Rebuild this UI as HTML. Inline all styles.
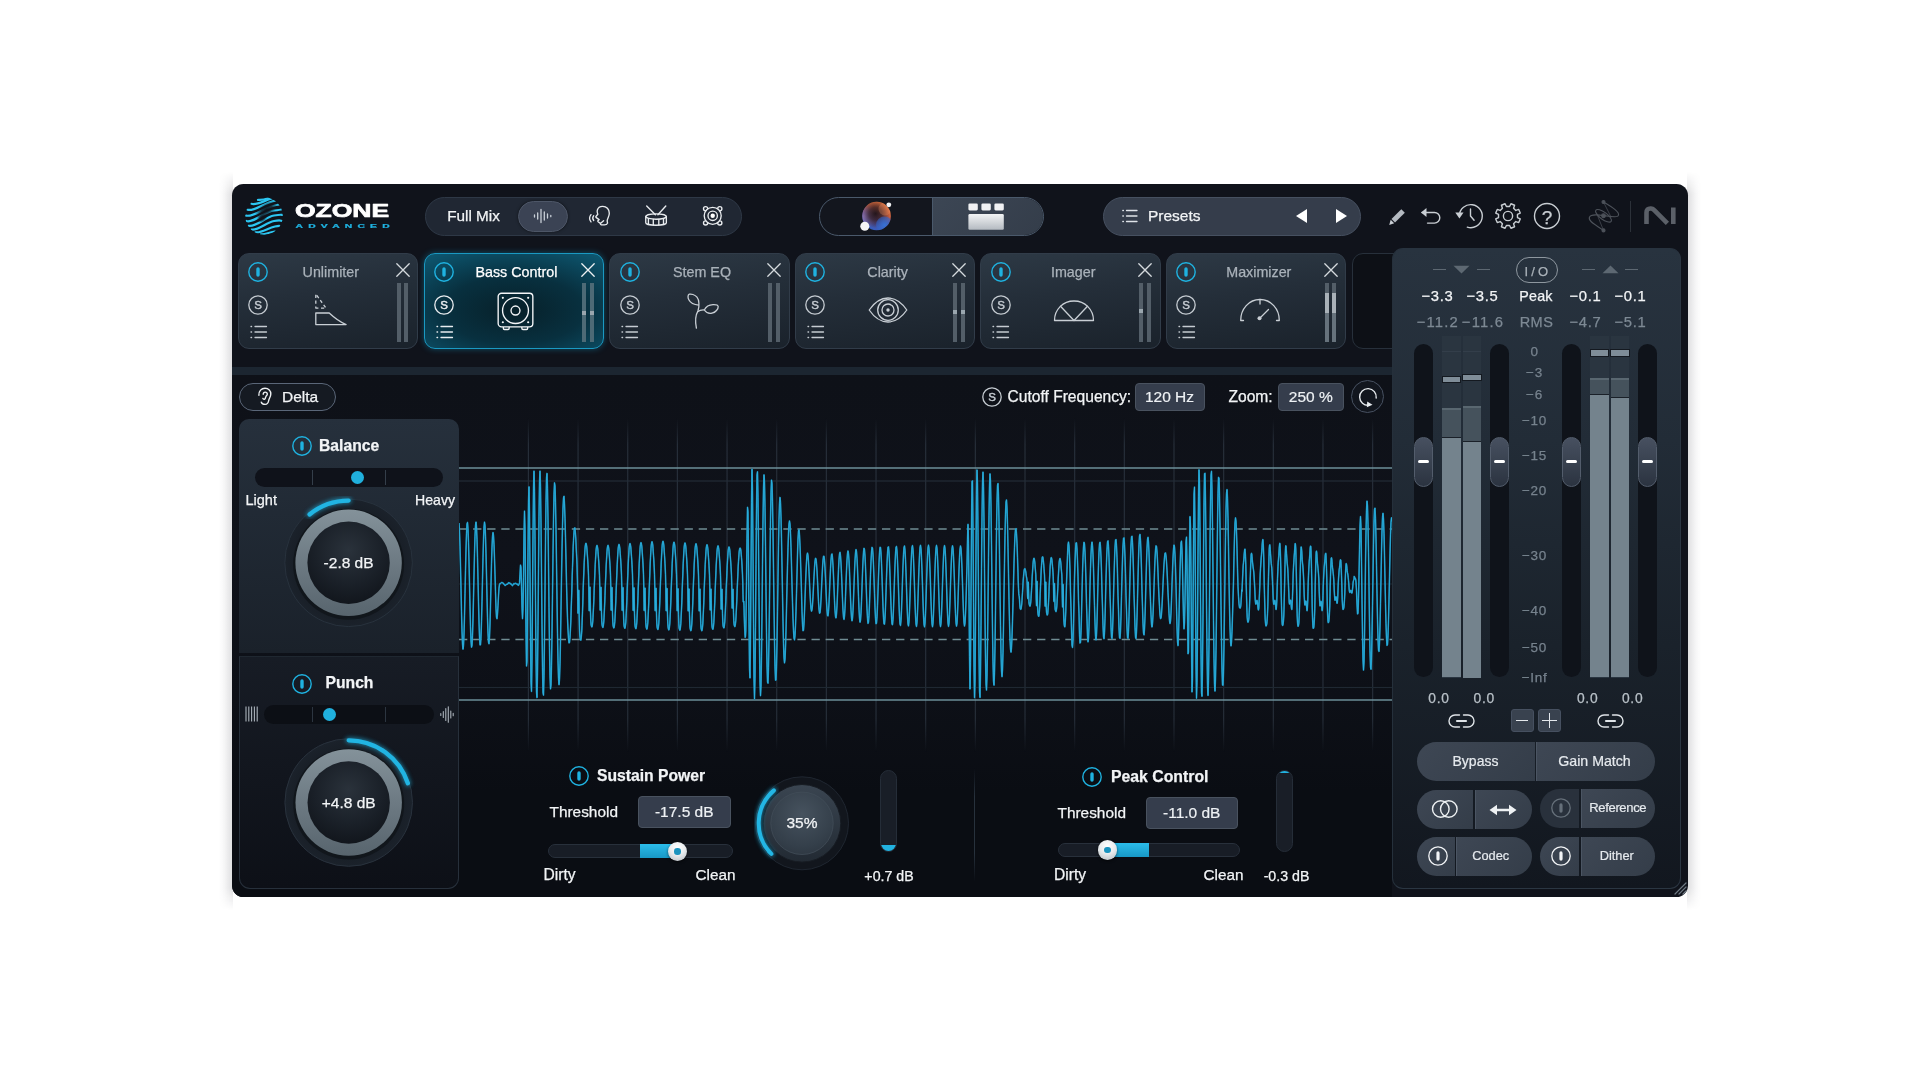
<!DOCTYPE html>
<html lang="en"><head><meta charset="utf-8"><title>Ozone Advanced - Bass Control</title>
<style>
*{box-sizing:border-box;margin:0;padding:0}
html,body{width:1920px;height:1080px;overflow:hidden;background:#fff}
body{position:relative;font-family:"Liberation Sans",Arial,sans-serif;color:#fff;-webkit-font-smoothing:antialiased}
.a{position:absolute}
.t{position:absolute;white-space:nowrap;line-height:1;transform:translate(-50%,-50%);color:#f2f4f6;-webkit-text-stroke:.25px}
.tl{position:absolute;white-space:nowrap;line-height:1;transform:translate(0,-50%);color:#f2f4f6;-webkit-text-stroke:.25px}
.tr{position:absolute;white-space:nowrap;line-height:1;transform:translate(-100%,-50%);color:#f2f4f6;-webkit-text-stroke:.25px}
svg{position:absolute;overflow:visible}
#win{left:232px;top:184px;width:1456px;height:712.700px;border-radius:11.500px;background:#10131b;overflow:hidden}
.pill{position:absolute;border-radius:20px}
.card{position:absolute;top:252.500px;width:180px;height:96.500px;border-radius:11px;border:1px solid #313c49;background:linear-gradient(172deg,#2d3945 0%,#242e39 42%,#1a222b 100%)}
.card.sel{border:1.500px solid #1a99c2;background:radial-gradient(ellipse 78% 72% at 50% 60%,#072029 0%,#08303f 50%,#0d566f 100%);box-shadow:0 0 6px rgba(20,150,195,.45)}
.ctitle{font-size:14.3px;color:#aab2ba}
.sel .ctitle{color:#fff}
.vbox{position:absolute;border-radius:4px;background:#353d4c;border:1px solid #49525f;font-size:15.5px;color:#eef1f4;text-align:center;-webkit-text-stroke:.2px}
.btn{position:absolute;background:#39424f;color:#e6eaee;font-size:14.5px;text-align:center;-webkit-text-stroke:.2px}
</style></head><body><div id="root" style="position:absolute;left:0;top:0;width:1920px;height:1080px;will-change:transform;transform:translateZ(0)">
<div class="a" style="left:219px;top:172px;width:14px;height:738px;background:linear-gradient(to left,rgba(10,10,25,.14),rgba(10,10,25,.04) 60%,rgba(10,10,25,0));-webkit-mask-image:linear-gradient(to bottom,transparent,#000 3%,#000 97%,transparent);mask-image:linear-gradient(to bottom,transparent,#000 3%,#000 97%,transparent)"></div>
<div class="a" style="left:1687px;top:172px;width:14px;height:738px;background:linear-gradient(to right,rgba(10,10,25,.14),rgba(10,10,25,.04) 60%,rgba(10,10,25,0));-webkit-mask-image:linear-gradient(to bottom,transparent,#000 3%,#000 97%,transparent);mask-image:linear-gradient(to bottom,transparent,#000 3%,#000 97%,transparent)"></div>
<div id="win" class="a"></div>
<!-- ===== HEADER ===== -->
<svg class="a" id="logo" style="left:245.4px;top:197.4px" width="38" height="38" viewBox="0 0 38 38">
<defs><clipPath id="lc"><circle cx="19" cy="19" r="18.8"/></clipPath>
<radialGradient id="lfade" cx="50%" cy="50%" r="50%"><stop offset="0" stop-color="#10131b" stop-opacity=".97"/><stop offset=".45" stop-color="#10131b" stop-opacity=".8"/><stop offset="1" stop-color="#10131b" stop-opacity="0"/></radialGradient></defs>
<g clip-path="url(#lc)" fill="none" stroke="#2cc6f1" stroke-width="2.2" stroke-linecap="round">
<path d="M13 2.8C17 3.5,21 2,24 1"/>
<path d="M6.5 6.8C12 8.5,19 3.5,27 1.5"/>
<path d="M2.5 12.8C10 14.5,18 6,31 3.5"/>
<path d="M1 18.6C10 20.5,18 10,34 7.5"/>
<path d="M1.3 24C9 26.5,19 14.5,29 13.5S35 12.5,38 12"/>
<path d="M3.5 28.8C11 30.5,20 20,29 18.5S36 18,38.5 18"/>
<path d="M6.5 32.5C13 34,21 25.5,29 24S35 24,38 24"/>
<path d="M10.5 35.3C16 36.5,23 31,30 29.5S34 29.5,37 29.5"/>
<path d="M16 37.3C20 37.8,25 35,30 34.5"/>
</g>
<ellipse cx="21.5" cy="12.5" rx="13" ry="6.5" fill="url(#lfade)" transform="rotate(-32 21.5 12.5)"/>
<ellipse cx="17" cy="21" rx="6" ry="4" fill="url(#lfade)" transform="rotate(-35 17 21)"/>
</svg>
<svg class="a" style="left:292px;top:200px" width="102" height="32" viewBox="0 0 102 32">
<text x="2.9" y="17.3" font-family="Liberation Sans,Arial,sans-serif" font-weight="700" font-size="18.6" fill="#fff" stroke="#fff" stroke-width=".7" stroke-linejoin="round" textLength="94.3" lengthAdjust="spacingAndGlyphs">OZONE</text>
<g transform="translate(3.5 27.8) scale(1.75 1)"><text x="0" y="0" font-family="Liberation Sans,Arial,sans-serif" font-weight="700" font-size="5.9" fill="#1fb2e0" stroke="#1fb2e0" stroke-width=".25" textLength="53.8" lengthAdjust="spacing">ADVANCED</text></g>
</svg>
<!-- Full Mix pill -->
<div class="pill" style="left:425px;top:197px;width:317px;height:39px;background:#202733;border:1px solid #2e3846"></div>
<div class="t" style="left:473.5px;top:216px;font-size:15.3px">Full Mix</div>
<div class="pill" style="left:518px;top:201px;width:50px;height:30.5px;background:#3b4354;border:1px solid #4d5667;box-shadow:0 0 3px rgba(0,0,0,.5)"></div>
<svg style="left:533px;top:208px" width="20" height="16" viewBox="0 0 20 16" fill="none" stroke="#c9d0d8" stroke-width="1.3" stroke-linecap="round">
<path d="M1.5 7v2M4.7 5v6M8 1.5v13M11.3 4v8M14.5 6v4M17.8 7.3v1.4"/></svg>
<!-- vocal icon -->
<svg style="left:588px;top:205px" width="24" height="22" viewBox="0 0 24 22" fill="none" stroke="#e9ecef" stroke-width="1.35" stroke-linecap="round" stroke-linejoin="round">
<path d="M15.6 15.7L12.4 18.4L10.1 16.7C9.6 16.3,9.8 15.7,10.3 15.4L11.1 14.6L8.3 12.6C7.7 12.2,7.7 11.6,8.1 11.2L9.8 9.2C9.2 8,9 6.5,9.3 5.2C10 2.8,12 1.4,14.7 1.4C18.5 1.4,21.3 4.2,21.3 8.2C21.3 11.6,19.4 13.2,19.2 15.6C19.1 16.6,19.6 17.4,19.5 18.2C19 19.3,17.8 19.8,16.4 19.8L14 19.8C13 19.8,12.2 19.3,12.4 18.4"/>
<path d="M5.7 10.7C4.5 12.2,4.5 14,5.7 15.5M3 9.6C1.1 12,1.1 14.5,3 16.9"/></svg>
<!-- drum icon -->
<svg style="left:644px;top:204px" width="24" height="23" viewBox="0 0 24 23" fill="none" stroke="#e9ecef" stroke-width="1.35" stroke-linecap="round" stroke-linejoin="round">
<path d="M2.7 2L11.4 10.7M21.8 2L13.9 10.7"/>
<ellipse cx="12.05" cy="12.5" rx="10.3" ry="2.7"/>
<path d="M1.75 12.5V18.7C1.75 20.1,6.3 21.2,12.05 21.2S22.35 20.1,22.35 18.7V12.5"/>
<path d="M4.4 14.7V20M9.3 15.3V20.9M14.8 15.3V20.9M19.5 14.7V20"/></svg>
<!-- bass/speaker icon -->
<svg style="left:702px;top:205px" width="22" height="22" viewBox="0 0 22 22" fill="none" stroke="#e9ecef" stroke-width="1.35">
<circle cx="3.6" cy="3.7" r="2.1"/><circle cx="17.8" cy="3.7" r="2.1"/><circle cx="3.6" cy="17.9" r="2.1"/><circle cx="17.8" cy="17.9" r="2.1"/>
<circle cx="10.7" cy="10.8" r="8.5" fill="#202733"/>
<circle cx="10.7" cy="10.8" r="4.7"/><circle cx="10.7" cy="10.8" r="2.2" fill="#fff" stroke="none"/></svg>

<!-- center toggle -->
<div class="pill" style="left:819px;top:197px;width:224.5px;height:39px;background:#13161e;border:1.3px solid #4a596b;overflow:hidden">
 <div class="a" style="left:111.5px;top:-1.3px;width:112px;height:39px;background:linear-gradient(135deg,#3c4654,#343d4a);border-left:1.3px solid #4a596b"></div>
</div>
<svg style="left:857px;top:198px" width="40" height="36" viewBox="0 0 40 36">
<defs><linearGradient id="orb" x1=".75" y1="0" x2=".3" y2="1"><stop offset="0" stop-color="#f07a3e"/><stop offset=".35" stop-color="#c9603f"/><stop offset=".6" stop-color="#6d4d8c"/><stop offset="1" stop-color="#2c5fc6"/></linearGradient>
<radialGradient id="orbd" cx="46%" cy="42%" r="50%"><stop offset="0" stop-color="#1d1218" stop-opacity=".95"/><stop offset=".45" stop-color="#2a1a20" stop-opacity=".75"/><stop offset="1" stop-color="#2a1a20" stop-opacity="0"/></radialGradient>
<radialGradient id="orbl" cx="8%" cy="50%" r="45%"><stop offset="0" stop-color="#a58ad0" stop-opacity=".85"/><stop offset="1" stop-color="#a58ad0" stop-opacity="0"/></radialGradient>
<radialGradient id="orb2" cx="50%" cy="50%" r="50%"><stop offset="0" stop-color="#3473d6" stop-opacity=".95"/><stop offset="1" stop-color="#2f62c8" stop-opacity=".55"/></radialGradient>
<clipPath id="orbc"><circle cx="19.6" cy="18" r="14.3"/></clipPath></defs>
<circle cx="19.6" cy="18" r="14.3" fill="url(#orb)"/>
<circle cx="19.6" cy="18" r="14.3" fill="url(#orbl)"/>
<circle cx="19.6" cy="18" r="14.3" fill="url(#orbd)"/>
<g clip-path="url(#orbc)"><circle cx="27.5" cy="27" r="8.5" fill="url(#orb2)"/><circle cx="28" cy="11" r="6.5" fill="#f59a6a" opacity=".28"/></g>
<circle cx="7.8" cy="28.3" r="4.5" fill="#f4f5f6"/>
<circle cx="31.8" cy="6.8" r="2.4" fill="#f4f5f6"/></svg>
<svg style="left:968.3px;top:202.9px" width="37" height="28" viewBox="0 0 37 28">
<defs><linearGradient id="gb" x1="0" y1="0" x2="0" y2="1"><stop offset="0" stop-color="#f2f3f4"/><stop offset="1" stop-color="#b4bac1"/></linearGradient></defs>
<rect x="0.4" y="0.5" width="9.4" height="6.9" rx="1.3" fill="#f1f2f4"/><rect x="13.4" y="0.5" width="9.4" height="6.9" rx="1.3" fill="#f1f2f4"/><rect x="26.4" y="0.5" width="9.4" height="6.9" rx="1.3" fill="#f1f2f4"/>
<rect x="0.4" y="11.1" width="35.4" height="15.6" rx="1.3" fill="url(#gb)"/></svg>

<!-- presets -->
<div class="pill" style="left:1103px;top:197px;width:258px;height:39px;background:#353d4b;border:1px solid #465060"></div>
<svg style="left:1122px;top:209px" width="16" height="14" viewBox="0 0 16 14" fill="none" stroke="#dfe3e8" stroke-width="1.3" stroke-linecap="round">
<path d="M4.5 1.5h10.5M4.5 7h10.5M4.5 12.5h10.5M0.8 1.5h.6M0.8 7h.6M0.8 12.5h.6"/></svg>
<div class="tl" style="left:1148px;top:216px;font-size:15.5px">Presets</div>
<svg style="left:1295px;top:208px" width="13" height="16" viewBox="0 0 13 16"><path d="M12 1v14L1 8z" fill="#fff"/></svg>
<svg style="left:1335px;top:208px" width="13" height="16" viewBox="0 0 13 16"><path d="M1 1v14l11-7z" fill="#fff"/></svg>

<!-- right icons -->
<svg style="left:1388px;top:208px" width="18" height="18" viewBox="0 0 18 18"><path d="M13.3 1.2l3.5 3.5-9.8 9.8-3.5-3.5z" fill="#b4bac1"/><path d="M2.7 11.8l3.5 3.5-5 1.6z" fill="#c9ced3"/></svg>
<svg style="left:1419px;top:206px" width="23" height="20" viewBox="0 0 23 20" fill="none" stroke="#c9ced3" stroke-width="1.4" stroke-linecap="round" stroke-linejoin="round">
<path d="M3 6.5h12.5a5.3 5.3 0 0 1 0 10.6h-7"/><path d="M7.5 2L2 6.5 7.5 11z" fill="#c9ced3" stroke="none"/></svg>
<svg style="left:1454px;top:202px" width="30" height="28" viewBox="0 0 30 28" fill="none" stroke="#c9ced3" stroke-width="1.4" stroke-linecap="round" stroke-linejoin="round">
<path d="M5.3 13.5a11.5 11.5 0 1 1 8 11.6"/><path d="M16.5 7v7l3.6 4.3"/><path d="M1.3 10.5h8.2l-4.1 6z" fill="#c9ced3" stroke="none"/></svg>
<svg style="left:1494px;top:202px" width="28" height="28" viewBox="-14 -14 28 28" fill="none" stroke="#c9ced3" stroke-width="1.4" stroke-linejoin="round">
<path d="M2.94 -12.25L6.58 -10.74L5.58 -7.81L7.81 -5.58L10.74 -6.58L12.25 -2.94L9.47 -1.58L9.47 1.58L12.25 2.94L10.74 6.58L7.81 5.58L5.58 7.81L6.58 10.74L2.94 12.25L1.58 9.47L-1.58 9.47L-2.94 12.25L-6.58 10.74L-5.58 7.81L-7.81 5.58L-10.74 6.58L-12.25 2.94L-9.47 1.58L-9.47 -1.58L-12.25 -2.94L-10.74 -6.58L-7.81 -5.58L-5.58 -7.81L-6.58 -10.74L-2.94 -12.25L-1.58 -9.47L1.58 -9.47Z"/><circle r="4.6"/></svg>
<svg style="left:1533px;top:202px" width="28" height="28" viewBox="0 0 28 28" fill="none" stroke="#c9ced3" stroke-width="1.4"><circle cx="14" cy="14" r="12.5"/></svg>
<div class="t" style="left:1547px;top:216.5px;font-size:19px;color:#c9ced3">?</div>
<!-- scribble logo -->
<svg style="left:0;top:0" width="1920" height="1080" viewBox="0 0 1920 1080" fill="none" stroke="#4d525a" stroke-width="1.1" stroke-linecap="round">
<path d="M1603.5 202C1612 207,1621 212.5,1618 216C1615 219.5,1592 211,1589.5 217C1587.5 221.5,1597 225.5,1603.5 230.4"/>
<ellipse cx="1603.5" cy="215.8" rx="9.5" ry="3.6" transform="rotate(36 1603.5 215.8)"/>
<path d="M1603.5 202L1611 217M1603.5 230.4L1596.5 213" stroke-width=".7"/>
<circle cx="1603.5" cy="202" r="1.5" fill="#4d525a"/><circle cx="1603.5" cy="230.4" r="1.5" fill="#4d525a"/><circle cx="1603.5" cy="215.8" r="1.9" fill="#4d525a"/></svg>
<div class="a" style="left:1629.5px;top:201px;width:1.3px;height:30.5px;background:#2c3139"></div>
<svg style="left:0;top:0" width="1920" height="1080" viewBox="0 0 1920 1080" fill="none" stroke="#5b6068" stroke-width="4.6">
<path d="M1646.5 224.1V212.8Q1646.5 208.3 1650.8 208.5Q1652.6 208.6 1654.2 210.2L1667.4 223.3M1673.3 207.5V224.1"/></svg>

<!-- ===== MODULE CARDS ===== -->
<div class="card" style="left:237.9px;width:180.6px"></div>
<svg style="left:247.3px;top:261.2px" width="22" height="22" viewBox="0 0 22 22"><circle cx="11" cy="11" r="9.2" fill="none" stroke="#1fb2e0" stroke-width="1.4"/><rect x="9.3" y="6.3" width="3.4" height="9.4" rx="1.7" fill="#1fb2e0"/></svg>
<svg style="left:247.3px;top:294px" width="22" height="22" viewBox="0 0 22 22"><circle cx="11" cy="11" r="9.2" fill="none" stroke="#c5cbd1" stroke-width="1.3"/><text x="11" y="15" text-anchor="middle" font-family="Liberation Sans,Arial,sans-serif" font-size="11.5" font-weight="400" stroke="#c5cbd1" stroke-width=".45" fill="#c5cbd1">S</text></svg>
<svg style="left:250px;top:324.5px" width="18" height="14" viewBox="0 0 18 14" fill="none" stroke="#c5cbd1" stroke-width="1.3" stroke-linecap="round"><path d="M5 1.5h11.5M5 7h11.5M5 12.5h11.5M1 1.5h.6M1 7h.6M1 12.5h.6"/></svg>
<div class="t ctitle" style="left:330.8px;top:272px;">Unlimiter</div>
<svg style="left:395.5px;top:263px" width="14" height="14" viewBox="0 0 14 14" fill="none" stroke="#d5dade" stroke-width="1.3" stroke-linecap="round"><path d="M.8.8l12.4 12.4M13.2.8L.8 13.2"/></svg>
<div class="a" style="left:396.5px;top:283px;width:4px;height:59px;background:#535e68"></div>
<div class="a" style="left:404.4px;top:283px;width:4px;height:59px;background:#535e68"></div>
<svg style="left:311.5px;top:292px" width="36" height="36" viewBox="0 0 36 36" fill="none" stroke="#c9cfd5" stroke-width="1.3" stroke-linejoin="round">
<path d="M3.8 21h13.4C22 25.5,27 29.5,34.1 32.6H3.8z"/><path d="M3.8 16.1V2l10.2 14.1z" stroke-dasharray="3.2 2.6" stroke-dashoffset="1.5"/></svg>
<div class="card sel" style="left:423.5px;width:180.6px"></div>
<svg style="left:432.9px;top:261.2px" width="22" height="22" viewBox="0 0 22 22"><circle cx="11" cy="11" r="9.2" fill="none" stroke="#1fb2e0" stroke-width="1.4"/><rect x="9.3" y="6.3" width="3.4" height="9.4" rx="1.7" fill="#1fb2e0"/></svg>
<svg style="left:432.9px;top:294px" width="22" height="22" viewBox="0 0 22 22"><circle cx="11" cy="11" r="9.2" fill="none" stroke="#e8ecef" stroke-width="1.3"/><text x="11" y="15" text-anchor="middle" font-family="Liberation Sans,Arial,sans-serif" font-size="11.5" font-weight="400" stroke="#e8ecef" stroke-width=".45" fill="#e8ecef">S</text></svg>
<svg style="left:435.6px;top:324.5px" width="18" height="14" viewBox="0 0 18 14" fill="none" stroke="#e8ecef" stroke-width="1.3" stroke-linecap="round"><path d="M5 1.5h11.5M5 7h11.5M5 12.5h11.5M1 1.5h.6M1 7h.6M1 12.5h.6"/></svg>
<div class="t ctitle" style="left:516.4px;top:272px;color:#fff;">Bass Control</div>
<svg style="left:581.1px;top:263px" width="14" height="14" viewBox="0 0 14 14" fill="none" stroke="#eef1f3" stroke-width="1.3" stroke-linecap="round"><path d="M.8.8l12.4 12.4M13.2.8L.8 13.2"/></svg>
<div class="a" style="left:582.1px;top:283px;width:4px;height:59px;background:#4d6a76"></div>
<div class="a" style="left:582.1px;top:311px;width:4px;height:4px;background:#9aa6ae"></div>
<div class="a" style="left:590px;top:283px;width:4px;height:59px;background:#4d6a76"></div>
<div class="a" style="left:590px;top:311px;width:4px;height:4px;background:#9aa6ae"></div>
<svg style="left:497.1px;top:291.8px" width="37" height="39" viewBox="0 0 38 40" fill="none" stroke="#f4f6f8" stroke-width="1.4">
<rect x="1.2" y="1.2" width="35.6" height="34.6" rx="3.5"/><circle cx="19" cy="19" r="13.3"/><circle cx="19" cy="19" r="4.6"/>
<circle cx="6" cy="6" r="1.1" fill="#f4f6f8" stroke="none"/><circle cx="32" cy="6" r="1.1" fill="#f4f6f8" stroke="none"/><circle cx="6" cy="31" r="1.1" fill="#f4f6f8" stroke="none"/><circle cx="32" cy="31" r="1.1" fill="#f4f6f8" stroke="none"/>
<path d="M6.5 36v1.3c0 .7.5 1.2 1.2 1.2h3.6c.7 0 1.2-.5 1.2-1.2V36M25.5 36v1.3c0 .7.5 1.2 1.2 1.2h3.6c.7 0 1.2-.5 1.2-1.2V36"/></svg>
<div class="card" style="left:609.1px;width:180.6px"></div>
<svg style="left:618.5px;top:261.2px" width="22" height="22" viewBox="0 0 22 22"><circle cx="11" cy="11" r="9.2" fill="none" stroke="#1fb2e0" stroke-width="1.4"/><rect x="9.3" y="6.3" width="3.4" height="9.4" rx="1.7" fill="#1fb2e0"/></svg>
<svg style="left:618.5px;top:294px" width="22" height="22" viewBox="0 0 22 22"><circle cx="11" cy="11" r="9.2" fill="none" stroke="#c5cbd1" stroke-width="1.3"/><text x="11" y="15" text-anchor="middle" font-family="Liberation Sans,Arial,sans-serif" font-size="11.5" font-weight="400" stroke="#c5cbd1" stroke-width=".45" fill="#c5cbd1">S</text></svg>
<svg style="left:621.2px;top:324.5px" width="18" height="14" viewBox="0 0 18 14" fill="none" stroke="#c5cbd1" stroke-width="1.3" stroke-linecap="round"><path d="M5 1.5h11.5M5 7h11.5M5 12.5h11.5M1 1.5h.6M1 7h.6M1 12.5h.6"/></svg>
<div class="t ctitle" style="left:702px;top:272px;">Stem EQ</div>
<svg style="left:766.7px;top:263px" width="14" height="14" viewBox="0 0 14 14" fill="none" stroke="#d5dade" stroke-width="1.3" stroke-linecap="round"><path d="M.8.8l12.4 12.4M13.2.8L.8 13.2"/></svg>
<div class="a" style="left:767.7px;top:283px;width:4px;height:59px;background:#535e68"></div>
<div class="a" style="left:775.6px;top:283px;width:4px;height:59px;background:#535e68"></div>
<svg style="left:685px;top:292px" width="36" height="38" viewBox="0 0 36 38" fill="none" stroke="#c9cfd5" stroke-width="1.3" stroke-linecap="round" stroke-linejoin="round">
<path d="M11.4 36.1C10 29,10.5 23,13 18.8C14.5 14.5,14.3 8,12 5.2C9.8 2.5,6 1.7,4.3 2.2C2.8 2.7,2.6 5.5,3.8 7.8C5.5 11,9.5 12.8,13.7 13.2"/>
<path d="M12.6 19.7C14.5 18.3,17 17.8,19.3 18C21 14.5,24.5 12.7,28 12.6C30.5 12.5,33 13.2,33.2 14.5C33.4 17,30.5 20.5,27 21.2C24 21.8,21 20.5,19.3 18"/></svg>
<div class="card" style="left:794.7px;width:180.6px"></div>
<svg style="left:804.1px;top:261.2px" width="22" height="22" viewBox="0 0 22 22"><circle cx="11" cy="11" r="9.2" fill="none" stroke="#1fb2e0" stroke-width="1.4"/><rect x="9.3" y="6.3" width="3.4" height="9.4" rx="1.7" fill="#1fb2e0"/></svg>
<svg style="left:804.1px;top:294px" width="22" height="22" viewBox="0 0 22 22"><circle cx="11" cy="11" r="9.2" fill="none" stroke="#c5cbd1" stroke-width="1.3"/><text x="11" y="15" text-anchor="middle" font-family="Liberation Sans,Arial,sans-serif" font-size="11.5" font-weight="400" stroke="#c5cbd1" stroke-width=".45" fill="#c5cbd1">S</text></svg>
<svg style="left:806.8px;top:324.5px" width="18" height="14" viewBox="0 0 18 14" fill="none" stroke="#c5cbd1" stroke-width="1.3" stroke-linecap="round"><path d="M5 1.5h11.5M5 7h11.5M5 12.5h11.5M1 1.5h.6M1 7h.6M1 12.5h.6"/></svg>
<div class="t ctitle" style="left:887.6px;top:272px;">Clarity</div>
<svg style="left:952.3px;top:263px" width="14" height="14" viewBox="0 0 14 14" fill="none" stroke="#d5dade" stroke-width="1.3" stroke-linecap="round"><path d="M.8.8l12.4 12.4M13.2.8L.8 13.2"/></svg>
<div class="a" style="left:953.3px;top:283px;width:4px;height:59px;background:#535e68"></div>
<div class="a" style="left:953.3px;top:309.5px;width:4px;height:4px;background:#9aa6ae"></div>
<div class="a" style="left:961.2px;top:283px;width:4px;height:59px;background:#535e68"></div>
<div class="a" style="left:961.2px;top:309.5px;width:4px;height:4px;background:#9aa6ae"></div>
<svg style="left:867.8px;top:296px" width="40" height="28" viewBox="0 0 40 28" fill="none" stroke="#c9cfd5" stroke-width="1.3" stroke-linejoin="round">
<path d="M1.2 14C7 5.5,13 2,20 2s13 3.5 18.8 12C33 22.5,27 26,20 26S7 22.5,1.2 14z"/><circle cx="20" cy="14" r="10.3"/><circle cx="20" cy="14" r="6"/><circle cx="20" cy="14" r="1.7" fill="#c9cfd5" stroke="none"/></svg>
<div class="card" style="left:980.3px;width:180.6px"></div>
<svg style="left:989.7px;top:261.2px" width="22" height="22" viewBox="0 0 22 22"><circle cx="11" cy="11" r="9.2" fill="none" stroke="#1fb2e0" stroke-width="1.4"/><rect x="9.3" y="6.3" width="3.4" height="9.4" rx="1.7" fill="#1fb2e0"/></svg>
<svg style="left:989.7px;top:294px" width="22" height="22" viewBox="0 0 22 22"><circle cx="11" cy="11" r="9.2" fill="none" stroke="#c5cbd1" stroke-width="1.3"/><text x="11" y="15" text-anchor="middle" font-family="Liberation Sans,Arial,sans-serif" font-size="11.5" font-weight="400" stroke="#c5cbd1" stroke-width=".45" fill="#c5cbd1">S</text></svg>
<svg style="left:992.4px;top:324.5px" width="18" height="14" viewBox="0 0 18 14" fill="none" stroke="#c5cbd1" stroke-width="1.3" stroke-linecap="round"><path d="M5 1.5h11.5M5 7h11.5M5 12.5h11.5M1 1.5h.6M1 7h.6M1 12.5h.6"/></svg>
<div class="t ctitle" style="left:1073.2px;top:272px;">Imager</div>
<svg style="left:1137.9px;top:263px" width="14" height="14" viewBox="0 0 14 14" fill="none" stroke="#d5dade" stroke-width="1.3" stroke-linecap="round"><path d="M.8.8l12.4 12.4M13.2.8L.8 13.2"/></svg>
<div class="a" style="left:1138.9px;top:283px;width:4px;height:59px;background:#535e68"></div>
<div class="a" style="left:1138.9px;top:308.5px;width:4px;height:4px;background:#9aa6ae"></div>
<div class="a" style="left:1146.8px;top:283px;width:4px;height:59px;background:#535e68"></div>
<svg style="left:1053.1px;top:299px" width="42" height="24" viewBox="0 0 42 24" fill="none" stroke="#c9cfd5" stroke-width="1.3" stroke-linejoin="round" stroke-linecap="round">
<path d="M1.5 21.5C1.5 10.5,10 2,21 2s19.5 8.5 19.5 19.5z"/><path d="M7.5 7.2L21 21.5 34.5 7.2"/></svg>
<div class="card" style="left:1165.9px;width:180.6px"></div>
<svg style="left:1175.3px;top:261.2px" width="22" height="22" viewBox="0 0 22 22"><circle cx="11" cy="11" r="9.2" fill="none" stroke="#1fb2e0" stroke-width="1.4"/><rect x="9.3" y="6.3" width="3.4" height="9.4" rx="1.7" fill="#1fb2e0"/></svg>
<svg style="left:1175.3px;top:294px" width="22" height="22" viewBox="0 0 22 22"><circle cx="11" cy="11" r="9.2" fill="none" stroke="#c5cbd1" stroke-width="1.3"/><text x="11" y="15" text-anchor="middle" font-family="Liberation Sans,Arial,sans-serif" font-size="11.5" font-weight="400" stroke="#c5cbd1" stroke-width=".45" fill="#c5cbd1">S</text></svg>
<svg style="left:1178px;top:324.5px" width="18" height="14" viewBox="0 0 18 14" fill="none" stroke="#c5cbd1" stroke-width="1.3" stroke-linecap="round"><path d="M5 1.5h11.5M5 7h11.5M5 12.5h11.5M1 1.5h.6M1 7h.6M1 12.5h.6"/></svg>
<div class="t ctitle" style="left:1258.8px;top:272px;">Maximizer</div>
<svg style="left:1323.5px;top:263px" width="14" height="14" viewBox="0 0 14 14" fill="none" stroke="#d5dade" stroke-width="1.3" stroke-linecap="round"><path d="M.8.8l12.4 12.4M13.2.8L.8 13.2"/></svg>
<div class="a" style="left:1324.5px;top:283px;width:4px;height:59px;background:#535e68"></div>
<div class="a" style="left:1324.5px;top:293px;width:4px;height:20px;background:#a9b1b8"></div>
<div class="a" style="left:1324.5px;top:313px;width:4px;height:29px;background:#66727c"></div>
<div class="a" style="left:1332.4px;top:283px;width:4px;height:59px;background:#535e68"></div>
<div class="a" style="left:1332.4px;top:293px;width:4px;height:20px;background:#a9b1b8"></div>
<div class="a" style="left:1332.4px;top:313px;width:4px;height:29px;background:#66727c"></div>
<svg style="left:1238.5px;top:297px" width="42" height="26" viewBox="0 0 42 26" fill="none" stroke="#c9cfd5" stroke-width="1.3" stroke-linecap="round" stroke-linejoin="round">
<path d="M4.5 23.5H1.7C1.7 12,10 2.5,21 2.5S40.3 12,40.3 23.5h-2.8"/><path d="M21 2.5v4.5M21 21l8.5-8.5"/><circle cx="20.5" cy="21.3" r="2" fill="#c9cfd5" stroke="none"/></svg>
<div class="a" style="left:1352px;top:253px;width:60px;height:96px;border-radius:11px;border:1px solid #27303b;background:#0d1016"></div>

<!-- ===== MAIN VIEW ===== -->
<div class="a" style="left:232px;top:374px;width:1160px;height:523px;background:linear-gradient(180deg,#0e1118 0%,#0f121a 35%,#0d1017 62%,#0a0d13 80%,#0a0d13 100%);border-bottom-left-radius:11.5px"></div>
<div class="a" style="left:232px;top:367px;width:1160px;height:7.5px;background:#1c2631"></div>
<div class="pill" style="left:239px;top:382.5px;width:97px;height:28.5px;border:1.5px solid #5a6678;background:#151a22"></div>
<svg style="left:256px;top:387px" width="18" height="20" viewBox="0 0 18 20" fill="none" stroke="#eef1f3" stroke-width="1.4" stroke-linecap="round" stroke-linejoin="round">
<path d="M2.9 8.3C2.6 4,5.5 1.2,9 1.2C12.6 1.2,14.9 3.8,14.8 7C14.7 10,13.2 11.2,12.7 13.5C12.3 15.8,11.2 17.4,9.2 17.4C7.3 17.4,5.8 16.6,5.3 15.2"/>
<path d="M7.2 7.3C7.2 5.9,8.1 5.1,9.3 5.1C10.5 5.1,11.4 6,11.3 7.3C11.2 8.5,10 8.9,9.7 9.9C9.4 10.7,9.6 11.6,8.7 12.1C7.9 12.5,7.1 12.1,6.9 11.4"/></svg>
<div class="tl" style="left:282px;top:396.5px;font-size:15.5px">Delta</div>
<svg style="left:981px;top:385.5px" width="22" height="22" viewBox="0 0 22 22"><circle cx="11" cy="11" r="9.2" fill="none" stroke="#c5cbd1" stroke-width="1.3"/><text x="11" y="15" text-anchor="middle" font-family="Liberation Sans,Arial,sans-serif" font-size="11.5" stroke="#c5cbd1" stroke-width=".45" fill="#c5cbd1">S</text></svg>
<div class="tl" style="left:1007.5px;top:397px;font-size:15.6px">Cutoff Frequency:</div>
<div class="vbox" style="left:1134.5px;top:383px;width:70px;height:27.5px;line-height:25.5px">120 Hz</div>
<div class="tl" style="left:1228.5px;top:397px;font-size:15.6px">Zoom:</div>
<div class="vbox" style="left:1277.5px;top:383px;width:66.5px;height:27.5px;line-height:25.5px">250 %</div>
<div class="a" style="left:1351px;top:380px;width:33px;height:33px;border-radius:50%;border:1px solid #475161;background:#12161e"></div>
<svg style="left:1356.5px;top:385.5px" width="22" height="22" viewBox="0 0 22 22" fill="none" stroke="#e8ecef" stroke-width="1.4" stroke-linecap="round"><path d="M11.8 19.2A8.3 8.3 0 1 1 19.2 12"/><path d="M10.2 15.6l5.3 3.2-5.6 2.4z" fill="#e8ecef" stroke="none"/></svg>
<svg style="left:0;top:0" width="1920" height="1080" viewBox="0 0 1920 1080">
<defs><linearGradient id="vg" x1="0" y1="418" x2="0" y2="752" gradientUnits="userSpaceOnUse"><stop offset="0" stop-color="#3a4654" stop-opacity="0"/><stop offset=".08" stop-color="#3a4654" stop-opacity=".55"/><stop offset=".9" stop-color="#3a4654" stop-opacity=".55"/><stop offset="1" stop-color="#3a4654" stop-opacity="0"/></linearGradient><clipPath id="wclip"><rect x="459" y="415" width="933" height="350"/></clipPath></defs>
<g clip-path="url(#wclip)">
<rect x="527.81" y="418" width="1.2" height="334" fill="url(#vg)"/>
<rect x="577.47" y="418" width="1.2" height="334" fill="url(#vg)"/>
<rect x="627.13" y="418" width="1.2" height="334" fill="url(#vg)"/>
<rect x="676.79" y="418" width="1.2" height="334" fill="url(#vg)"/>
<rect x="726.45" y="418" width="1.2" height="334" fill="url(#vg)"/>
<rect x="776.11" y="418" width="1.2" height="334" fill="url(#vg)"/>
<rect x="825.77" y="418" width="1.2" height="334" fill="url(#vg)"/>
<rect x="875.43" y="418" width="1.2" height="334" fill="url(#vg)"/>
<rect x="925.09" y="418" width="1.2" height="334" fill="url(#vg)"/>
<rect x="974.75" y="418" width="1.2" height="334" fill="url(#vg)"/>
<rect x="1024.41" y="418" width="1.2" height="334" fill="url(#vg)"/>
<rect x="1074.07" y="418" width="1.2" height="334" fill="url(#vg)"/>
<rect x="1123.73" y="418" width="1.2" height="334" fill="url(#vg)"/>
<rect x="1173.39" y="418" width="1.2" height="334" fill="url(#vg)"/>
<rect x="1223.05" y="418" width="1.2" height="334" fill="url(#vg)"/>
<rect x="1272.71" y="418" width="1.2" height="334" fill="url(#vg)"/>
<rect x="1322.37" y="418" width="1.2" height="334" fill="url(#vg)"/>
<rect x="1372.03" y="418" width="1.2" height="334" fill="url(#vg)"/>
<rect x="459" y="480.45" width="933" height="1.1" fill="#252e39"/>
<rect x="459" y="686.95" width="933" height="1.1" fill="#1f2832"/>
<rect x="459" y="583.45" width="933" height="1.1" fill="#1e2630"/>
<rect x="459" y="467.3" width="933" height="1.4" fill="#7397a1"/>
<rect x="459" y="699.3" width="933" height="1.4" fill="#7397a1"/>
<path d="M459 529H1392" stroke="#6f8c92" stroke-width="1.5" stroke-dasharray="8.3 5.8" stroke-dashoffset="0" fill="none"/>
<path d="M459 639.5H1392" stroke="#6f8c92" stroke-width="1.5" stroke-dasharray="8.3 5.8" stroke-dashoffset="0" fill="none"/>
<defs><path id="wv" d="M459 523 L459.5 531.1 L460 546.1 L460.5 566.1 L461 588.8 L461.5 611.8 L462 631.1 L462.5 644.1 L463 649.2 L463.5 645.6 L464 634 L464.5 615.8 L465 593.4 L465.5 570.5 L466 549.8 L466.5 533.6 L467 524 L467.5 522.4 L468 528.9 L468.5 542.6 L469 561.9 L469.5 584 L470 606.8 L470.5 626.6 L471 640.6 L471.5 647.2 L472 645.4 L472.5 635.6 L473 618.9 L473.5 597.7 L474 575 L474.5 553.7 L475 536.3 L475.5 525.3 L476 522 L476.5 526.9 L477 539.4 L477.5 557.7 L478 579.5 L478.5 601.9 L479 622 L479.5 637 L480 644.9 L480.5 644.8 L481 636.7 L481.5 621.7 L482 601.7 L482.5 579.5 L483 557.7 L483.5 539.4 L484 526.9 L484.5 522 L485 525.3 L485.5 536.3 L486 553.7 L486.5 575 L487 597.2 L487.5 617.4 L488 633.1 L488.5 642.3 L489 643.8 L489.5 637.4 L490 624 L490.5 605.1 L491 584 L491.5 563.7 L492 547.2 L492.5 536.4 L493 532.5 L493.5 535.5 L494 544.6 L494.5 558.2 L495 574.2 L495.5 591.4 L496 608.5 L496.5 617.3 L497 618.7 L497.5 614 L498 605.5 L498.5 596 L499 588.2 L499.5 584.4 L500 583.5 L500.5 583.6 L501 583.2 L501.5 582.4 L502 582.4 L502.5 582.6 L503 583.4 L503.5 583.3 L504 584.4 L504.5 584.7 L505 585.5 L505.5 585.5 L506 584.5 L506.5 584.5 L507 584 L507.5 584.2 L508 583.6 L508.5 582.6 L509 583.3 L509.5 582.8 L510 583.2 L510.5 584 L511 583.7 L511.5 584.6 L512 585.2 L512.5 585.7 L513 584.8 L513.5 584 L514 583.4 L514.5 583.9 L515 583.6 L515.5 583.3 L516 583.3 L516.5 584.1 L517 584.2 L517.5 584.1 L518 585.2 L518.5 585.4 L519 584.3 L519.5 582.9 L520 574.2 L520.5 565 L521 567.4 L521.5 586.3 L522 607.5 L522.5 618.7 L523 608.6 L523.5 577.5 L524 533.3 L524.5 511 L525 528 L525.5 580.6 L526 632.3 L526.5 666.1 L527 661.6 L527.5 615 L528 552.3 L528.5 502.1 L529 486.8 L529.5 514 L530 571.6 L530.5 636.6 L531 682.5 L531.5 691.4 L532 660.1 L532.5 600 L533 536 L533.5 488.1 L534 471.1 L534.5 491.2 L535 539.4 L535.5 600.5 L536 656.7 L536.5 692 L537 697.6 L537.5 672.9 L538 625.3 L538.5 568.2 L539 516.7 L539.5 481.8 L540 471.1 L540.5 486.2 L541 522.9 L541.5 572.8 L542 624.8 L542.5 667.7 L543 692.7 L543.5 695.2 L544 675.3 L544.5 637.7 L545 590.2 L545.5 542.1 L546 502.4 L546.5 478.2 L547 473.4 L547.5 488.4 L548 520.2 L548.5 562.7 L549 607.6 L549.5 647.3 L550 675.8 L550.5 689 L551 685.2 L551.5 665.5 L552 633.5 L552.5 594.6 L553 554.4 L553.5 519.3 L554 494.3 L554.5 482.8 L555 485.8 L555.5 502.4 L556 529.6 L556.5 563.3 L557 599.2 L557.5 633.2 L558 660.5 L558.5 678.3 L559 684.7 L559.5 679.5 L560 663.7 L560.5 639.5 L561 609.6 L561.5 578.1 L562 549.8 L562.5 525.8 L563 508 L563.5 497.9 L564 496.2 L564.5 503.9 L565 518.3 L565.5 537.6 L566 559.8 L566.5 582.7 L567 601.9 L567.5 617.9 L568 629.5 L568.5 638.5 L569 643 L569.5 642.5 L570 637.4 L570.2 633.2 L570.5 628.1 L570.8 622.2 L571 615.4 L571.2 608.1 L571.5 600.3 L571.8 592.2 L572 583.9 L572.2 575.6 L572.5 567.5 L572.8 559.8 L573 552.6 L573.2 546.1 L573.5 540.5 L573.8 535.8 L574 532.1 L574.2 529.6 L574.5 528.1 L574.8 527.8 L575 528.6 L575.2 530.9 L575.5 534.1 L575.8 538.2 L576 542.9 L576.2 548.2 L576.5 553.8 L576.8 559.3 L577 564.8 L577.2 572.2 L577.5 584 L577.8 601.5 L578 613.3 L578.2 610 L578.5 596.7 L578.8 590.2 L579 599.2 L579.2 616 L579.5 629 L579.8 635 L580 637.3 L580.2 638.7 L580.5 639.9 L580.8 640.2 L581 639.5 L581.2 637.7 L581.5 634.7 L581.8 630.6 L582 625.4 L582.2 619 L582.5 611.8 L582.8 604.1 L583 595.9 L583.2 587.5 L583.5 580.3 L583.8 574 L584 568 L584.2 562.4 L584.5 557.3 L584.8 552.9 L585 549.3 L585.2 546.5 L585.5 544.5 L585.8 543.4 L586 543.2 L586.2 543.8 L586.5 545.2 L586.8 547.2 L587 550 L587.2 553.3 L587.5 557 L587.8 561 L588 564.8 L588.2 568.8 L588.5 575.2 L588.8 587.3 L589 603.2 L589.2 610.8 L589.5 603 L589.8 589.6 L590 587 L590.2 598 L590.5 612 L590.8 620.5 L591 623.8 L591.2 625.2 L591.5 626.3 L591.8 627 L592 626.9 L592.2 625.9 L592.5 624 L592.8 621.2 L593 617.5 L593.2 612.9 L593.5 607.6 L593.8 601.7 L594 595.3 L594.2 588.6 L594.5 582 L594.8 575.9 L595 570 L595.2 564.5 L595.5 559.6 L595.8 555.2 L596 551.6 L596.2 548.8 L596.5 546.8 L596.8 545.7 L597 545.4 L597.2 545.9 L597.5 547.1 L597.8 549.1 L598 551.7 L598.2 554.8 L598.5 558.4 L598.8 562.1 L599 565.8 L599.2 569.5 L599.5 575.6 L599.8 587 L600 602.5 L600.2 610.2 L600.5 602.8 L600.8 589.7 L601 587.2 L601.2 598.3 L601.5 612.3 L601.8 620.9 L602 624.2 L602.2 625.6 L602.5 626.7 L602.8 627.4 L603 627.4 L603.2 626.4 L603.5 624.4 L603.8 621.6 L604 617.8 L604.2 613.2 L604.5 607.8 L604.8 601.8 L605 595.4 L605.2 588.7 L605.5 582 L605.8 576 L606 570.2 L606.2 564.8 L606.5 559.8 L606.8 555.5 L607 551.8 L607.2 549 L607.5 546.9 L607.8 545.7 L608 545.3 L608.2 545.8 L608.5 546.9 L608.8 548.8 L609 551.4 L609.2 554.4 L609.5 558 L609.8 561.8 L610 565.4 L610.2 569.3 L610.5 575.4 L610.8 586.9 L611 602.6 L611.2 610.3 L611.5 602.9 L611.8 589.9 L612 587.4 L612.2 598.5 L612.5 612.7 L612.8 621.3 L613 624.6 L613.2 626.1 L613.5 627.2 L613.8 627.9 L614 627.8 L614.2 626.8 L614.5 624.8 L614.8 621.9 L615 618.1 L615.2 613.5 L615.5 608 L615.8 602 L616 595.5 L616.2 588.7 L616.5 582 L616.8 575.8 L617 569.9 L617.2 564.3 L617.5 559.2 L617.8 554.8 L618 551.1 L618.2 548.1 L618.5 546.1 L618.8 544.8 L619 544.4 L619.2 544.8 L619.5 546.1 L619.8 548 L620 550.6 L620.2 553.7 L620.5 557.4 L620.8 561.2 L621 565 L621.2 568.9 L621.5 575.2 L621.8 586.9 L622 602.6 L622.2 610.4 L622.5 603.1 L622.8 590 L623 587.6 L623.2 598.8 L623.5 613 L623.8 621.7 L624 625 L624.2 626.5 L624.5 627.6 L624.8 628.3 L625 628.2 L625.2 627.2 L625.5 625.2 L625.8 622.3 L626 618.4 L626.2 613.7 L626.5 608.3 L626.8 602.2 L627 595.6 L627.2 588.7 L627.5 581.9 L627.8 575.7 L628 569.6 L628.2 563.9 L628.5 558.7 L628.8 554.1 L629 550.3 L629.2 547.3 L629.5 545.2 L629.8 543.9 L630 543.5 L630.2 543.9 L630.5 545.2 L630.8 547.1 L631 549.8 L631.2 553 L631.5 556.7 L631.8 560.7 L632 564.6 L632.2 568.6 L632.5 575 L632.8 586.9 L633 602.7 L633.2 610.5 L633.5 603.2 L633.8 590.2 L634 587.8 L634.2 599.1 L634.5 613.3 L634.8 622 L635 625.4 L635.2 626.9 L635.5 628 L635.8 628.7 L636 628.7 L636.2 627.6 L636.5 625.6 L636.8 622.7 L637 618.8 L637.2 614 L637.5 608.5 L637.8 602.3 L638 595.7 L638.2 588.8 L638.5 581.9 L638.8 575.5 L639 569.3 L639.2 563.4 L639.5 558.1 L639.8 553.5 L640 549.6 L640.2 546.5 L640.5 544.3 L640.8 543 L641 542.6 L641.2 543 L641.5 544.3 L641.8 546.3 L642 549 L642.2 552.3 L642.5 556.1 L642.8 560.2 L643 564.1 L643.2 568.2 L643.5 574.8 L643.8 586.8 L644 602.7 L644.2 610.6 L644.5 603.4 L644.8 590.4 L645 588 L645.2 599.3 L645.5 613.6 L645.8 622.4 L646 625.8 L646.2 627.3 L646.5 628.4 L646.8 629.1 L647 629 L647.2 628 L647.5 626 L647.8 623 L648 619 L648.2 614.2 L648.5 608.7 L648.8 602.5 L649 595.8 L649.2 588.8 L649.5 581.9 L649.8 575.3 L650 568.9 L650.2 563 L650.5 557.6 L650.8 552.8 L651 548.8 L651.2 545.7 L651.5 543.4 L651.8 542.1 L652 541.7 L652.2 542.1 L652.5 543.4 L652.8 545.4 L653 548.2 L653.2 551.6 L653.5 555.5 L653.8 559.6 L654 563.7 L654.2 567.9 L654.5 574.6 L654.8 586.8 L655 602.7 L655.2 610.7 L655.5 603.5 L655.8 590.5 L656 588.2 L656.2 599.6 L656.5 613.9 L656.8 622.7 L657 626.1 L657.2 627.7 L657.5 628.8 L657.8 629.5 L658 629.4 L658.2 628.4 L658.5 626.3 L658.8 623.3 L659 619.3 L659.2 614.5 L659.5 608.9 L659.8 602.6 L660 595.9 L660.2 588.9 L660.5 581.8 L660.8 575.1 L661 568.7 L661.2 562.6 L661.5 557.2 L661.8 552.4 L662 548.3 L662.2 545.2 L662.5 542.9 L662.8 541.6 L663 541.2 L663.2 541.7 L663.5 543 L663.8 545.1 L664 547.9 L664.2 551.4 L664.5 555.3 L664.8 559.5 L665 563.6 L665.2 567.9 L665.5 574.6 L665.8 586.8 L666 602.7 L666.2 610.8 L666.5 603.6 L666.8 590.7 L667 588.4 L667.2 599.8 L667.5 614.2 L667.8 623 L668 626.5 L668.2 628 L668.5 629.2 L668.8 629.9 L669 629.8 L669.2 628.7 L669.5 626.6 L669.8 623.6 L670 619.6 L670.2 614.7 L670.5 609.1 L670.8 602.8 L671 596 L671.2 588.9 L671.5 581.9 L671.8 575.3 L672 569 L672.2 563.1 L672.5 557.7 L672.8 553 L673 549 L673.2 546 L673.5 543.7 L673.8 542.4 L674 542.1 L674.2 542.5 L674.5 543.8 L674.8 545.9 L675 548.6 L675.2 552 L675.5 555.9 L675.8 560 L676 564 L676.2 568.2 L676.5 574.7 L676.8 586.7 L677 602.8 L677.2 610.8 L677.5 603.7 L677.8 590.9 L678 588.7 L678.2 600.1 L678.5 614.5 L678.8 623.3 L679 626.8 L679.2 628.4 L679.5 629.5 L679.8 630.2 L680 630.1 L680.2 629 L680.5 627 L680.8 623.9 L681 619.8 L681.2 614.9 L681.5 609.2 L681.8 602.9 L682 596.1 L682.2 588.9 L682.5 581.9 L682.8 575.5 L683 569.3 L683.2 563.5 L683.5 558.2 L683.8 553.6 L684 549.7 L684.2 546.7 L684.5 544.5 L684.8 543.3 L685 542.9 L685.2 543.3 L685.5 544.6 L685.8 546.6 L686 549.3 L686.2 552.6 L686.5 556.4 L686.8 560.4 L687 564.4 L687.2 568.5 L687.5 574.9 L687.8 586.7 L688 602.8 L688.2 610.9 L688.5 603.8 L688.8 591.1 L689 588.9 L689.2 600.4 L689.5 614.8 L689.8 623.7 L690 627.2 L690.2 628.7 L690.5 629.9 L690.8 630.6 L691 630.5 L691.2 629.4 L691.5 627.3 L691.8 624.2 L692 620.1 L692.2 615.2 L692.5 609.4 L692.8 603 L693 596.2 L693.2 589 L693.5 581.9 L693.8 575.7 L694 569.6 L694.2 563.9 L694.5 558.7 L694.8 554.2 L695 550.4 L695.2 547.5 L695.5 545.3 L695.8 544.1 L696 543.7 L696.2 544.1 L696.5 545.4 L696.8 547.3 L697 550 L697.2 553.2 L697.5 556.9 L697.8 560.9 L698 564.8 L698.2 568.8 L698.5 575.1 L698.8 586.7 L699 602.8 L699.2 610.9 L699.5 604 L699.8 591.2 L700 589.1 L700.2 600.6 L700.5 615 L700.8 623.9 L701 627.4 L701.2 628.9 L701.5 630 L701.8 630.7 L702 630.5 L702.2 629.4 L702.5 627.2 L702.8 624.1 L703 620 L703.2 615 L703.5 609.3 L703.8 602.9 L704 596.1 L704.2 588.9 L704.5 582 L704.8 575.9 L705 569.9 L705.2 564.4 L705.5 559.4 L705.8 555 L706 551.3 L706.2 548.4 L706.5 546.3 L706.8 545.1 L707 544.7 L707.2 545.1 L707.5 546.3 L707.8 548.3 L708 550.8 L708.2 554 L708.5 557.6 L708.8 561.5 L709 565.3 L709.2 569.2 L709.5 575.3 L709.8 586.5 L710 602.2 L710.2 610.1 L710.5 603.4 L710.8 591.1 L711 589.1 L711.2 600.2 L711.5 614.2 L711.8 622.7 L712 626.1 L712.2 627.6 L712.5 628.7 L712.8 629.3 L713 629.2 L713.2 628.1 L713.5 626 L713.8 622.9 L714 618.9 L714.2 614.1 L714.5 608.5 L714.8 602.4 L715 595.7 L715.2 588.8 L715.5 582.1 L715.8 576.1 L716 570.3 L716.2 565 L716.5 560.1 L716.8 555.8 L717 552.2 L717.2 549.4 L717.5 547.4 L717.8 546.2 L718 545.8 L718.2 546.2 L718.5 547.4 L718.8 549.3 L719 551.8 L719.2 554.8 L719.5 558.3 L719.8 562.1 L720 565.8 L720.2 569.6 L720.5 575.6 L720.8 586.4 L721 601.5 L721.2 609.2 L721.5 602.7 L721.8 591 L722 589.2 L722.2 599.9 L722.5 613.3 L722.8 621.6 L723 624.8 L723.2 626.3 L723.5 627.3 L723.8 628 L724 627.8 L724.2 626.7 L724.5 624.7 L724.8 621.7 L725 617.8 L725.2 613.2 L725.5 607.8 L725.8 601.8 L726 595.4 L726.2 588.6 L726.5 582.1 L726.8 576.3 L727 570.7 L727.2 565.5 L727.5 560.8 L727.8 556.6 L728 553.1 L728.2 550.4 L728.5 548.4 L728.8 547.3 L729 546.9 L729.2 547.3 L729.5 548.4 L729.8 550.2 L730 552.7 L730.2 555.6 L730.5 559.1 L730.8 562.7 L731 566.3 L731.2 570 L731.5 575.8 L731.8 586.3 L732 600.8 L732.2 608.2 L732.5 602.1 L732.8 590.9 L733 589.2 L733.2 599.5 L733.5 612.5 L733.8 620.4 L734 623.6 L734.2 625 L734.5 626 L734.8 626.6 L735 626.4 L735.2 625.4 L735.5 623.4 L735.8 620.5 L736 616.8 L736.2 612.2 L736.5 607 L736.8 601.2 L737 595 L737.2 588.5 L737.5 582.2 L737.8 576.6 L738 571.1 L738.2 566.1 L738.5 561.5 L738.8 557.4 L739 554.1 L739.2 551.4 L739.5 549.5 L739.8 548.4 L740 548 L740.2 548 L740.5 548.6 L740.8 550 L741 551.9 L741.2 554.5 L741.5 557.7 L741.8 561.2 L742 565 L742.2 569.2 L742.5 574.9 L742.8 583.4 L743 594.6 L743.2 601.6 L743.5 602.1 L743.8 601.4 L744 605.6 L744.2 615.1 L744.5 624.8 L744.8 631.2 L745 635.2 L745.2 637.4 L745.5 636.4 L745.8 630.6 L746 618.1 L746.5 581.5 L747 538.3 L747.5 507.2 L748 511.6 L748.5 560.7 L749 621.8 L749.5 668.7 L750 678 L750.5 639.1 L751 571.2 L751.5 502.5 L752 469.2 L752.5 490.9 L753 552.1 L753.5 623.8 L754 679.7 L754.5 699 L755 678.3 L755.5 627.5 L756 564.3 L756.5 508.4 L757 474.9 L757.5 471.7 L758 497.2 L758.5 543.1 L759 597.4 L759.5 647.6 L760 682.4 L760.5 695.8 L761 686.2 L761.5 656.3 L762 612.8 L762.5 564.3 L763 519.9 L763.5 488.1 L764 474.8 L764.5 481.9 L765 507.6 L765.5 546.8 L766 591.7 L766.5 632.3 L767 664.2 L767.5 682 L768 683.2 L768.5 667.7 L769 638.5 L769.5 600.6 L770 559 L770.5 520.7 L771 492.8 L771.5 480 L772 483.4 L772.5 501.7 L773 531.8 L773.5 568.8 L774 607.1 L774.5 641.3 L775 666.7 L775.5 680.2 L776 680 L776.5 666.9 L777 642.8 L777.5 611.4 L778 577.2 L778.5 545.6 L779 519.7 L779.5 503.3 L780 497.4 L780.5 502.4 L781 517 L781.5 538.9 L782 565.1 L782.5 593.4 L783 621.2 L783.5 643.3 L784 657.6 L784.5 662.9 L785 659.3 L785.5 647.8 L786 630.2 L786.5 608.8 L787 586.2 L787.5 565.7 L788 547.4 L788.5 533 L789 523.9 L789.5 520.9 L790 524.1 L790.5 533.2 L791 547.3 L791.5 565.1 L792 584.7 L792.5 602.3 L793 618.2 L793.5 630.6 L794 638.1 L794.5 639.9 L795 635.6 L795.5 625.8 L796 611.2 L796.5 593.6 L797 574.1 L797.5 554.9 L798 539.1 L798.5 530.9 L799 529.5 L799.5 534.7 L800 545.2 L800.5 559.3 L801 575 L801.5 592.3 L802 611.3 L802.5 624.4 L803 630.8 L803.5 630.2 L804 623.4 L804.5 612 L805 598.3 L805.5 584.6 L806 572.1 L806.5 561.8 L807 555.2 L807.5 553 L808 555.5 L808.5 562 L809 571.5 L809.5 582.3 L810 593.1 L810.5 602.2 L811 608.6 L811.5 611.2 L812 609.7 L812.5 604.8 L813 596.7 L813.5 586.6 L814 576.6 L814.5 567.8 L815 561.4 L815.5 558.2 L816 558.9 L816.5 563.3 L817 570.9 L817.5 580.5 L818 591.3 L818.5 601.5 L819 609.2 L819.5 613.2 L820 612.8 L820.5 608.2 L821 599.8 L821.5 589 L822 577.9 L822.5 568 L823 560.4 L823.5 556.3 L824 556.2 L824.5 560.4 L825 568.1 L825.5 578.2 L826 589.9 L826.5 601.3 L827 610.3 L827.5 615.4 L828 615.9 L828.5 611.6 L829 603.1 L829.5 591.7 L830 579.4 L830.5 568.5 L831 559.8 L831.5 554.7 L832 553.9 L832.5 557.7 L833 565.4 L833.5 575.9 L834 588 L834.5 600.5 L835 610.5 L835.5 616.6 L836 617.9 L836.5 614.1 L837 605.8 L837.5 594.1 L838 581.2 L838.5 569.5 L839 559.9 L839.5 553.9 L840 552.3 L840.5 555.5 L841 563 L841.5 573.6 L842 586 L842.5 599.2 L843 610.2 L843.5 617.3 L844 619.4 L844.5 616.3 L845 608.3 L845.5 596.6 L846 583.1 L846.5 570.7 L847 560.2 L847.5 553.2 L848 550.9 L848.5 553.4 L849 560.6 L849.5 571.3 L850 584 L850.5 597.9 L851 609.7 L851.5 617.8 L852 620.8 L852.5 618.4 L853 610.7 L853.5 599 L854 585 L854.5 571.9 L855 560.6 L855.5 552.7 L856 549.5 L856.5 551.4 L857 558.3 L857.5 569 L858 582.1 L858.5 596.5 L859 609.2 L859.5 618.2 L860 622.2 L860.5 620.4 L861 613.1 L861.5 601.4 L862 587.1 L862.5 573.1 L863 561 L863.5 552.2 L864 548.2 L864.5 549.5 L865 556.1 L865.5 566.8 L866 580.2 L866.5 595 L867 608.6 L867.5 618.6 L868 623.4 L868.5 622.3 L869 615.4 L869.5 603.8 L870 589.2 L870.5 574.5 L871 561.6 L871.5 552 L872 547.3 L872.5 548.1 L873 554.2 L873.5 564.9 L874 578.4 L874.5 593.5 L875 607.7 L875.5 618.3 L876 623.8 L876.5 623.3 L877 616.9 L877.5 605.6 L878 591 L878.5 576 L879 562.7 L879.5 552.7 L880 547.3 L880.5 547.4 L881 553 L881.5 563.3 L882 576.8 L882.5 591.9 L883 606.5 L883.5 617.7 L884 623.9 L884.5 624.1 L885 618.2 L885.5 607.2 L886 592.7 L886.5 577.4 L887 563.8 L887.5 553.3 L888 547.3 L888.5 546.8 L889 552 L889.5 562 L890 575.3 L890.5 590.4 L891 605.4 L891.5 617.2 L892 624 L892.5 624.8 L893 619.4 L893.5 608.7 L894 594.3 L894.5 578.8 L895 564.9 L895.5 553.8 L896 547.3 L896.5 546.4 L897 551.1 L897.5 560.7 L898 573.9 L898.5 589 L899 604.4 L899.5 616.7 L900 624 L900.5 625.4 L901 620.5 L901.5 610.1 L902 595.7 L902.5 580 L903 565.8 L903.5 554.4 L904 547.4 L904.5 545.9 L905 550.2 L905.5 559.6 L906 572.7 L906.5 587.8 L907 603.5 L907.5 616.2 L908 624.1 L908.5 626 L909 621.5 L909.5 611.3 L910 597 L910.5 581.1 L911 566.6 L911.5 554.8 L912 547.4 L912.5 545.5 L913 549.5 L913.5 558.6 L914 571.6 L914.5 586.7 L915 602.7 L915.5 615.8 L916 624.2 L916.5 626.5 L917 622.3 L917.5 612.4 L918 598.2 L918.5 582 L919 567.4 L919.5 555.3 L920 547.5 L920.5 545.2 L921 548.8 L921.5 557.7 L922 570.6 L922.5 585.7 L923 602 L923.5 615.5 L924 624.3 L924.5 626.9 L925 623.1 L925.5 613.4 L926 599.2 L926.5 582.8 L927 568 L927.5 555.7 L928 547.6 L928.5 545.1 L929 548.4 L929.5 557.2 L930 569.9 L930.5 584.9 L931 601.2 L931.5 614.9 L932 623.9 L932.5 626.8 L933 623.3 L933.5 613.8 L934 599.8 L934.5 583.5 L935 568.7 L935.5 556.3 L936 548.1 L936.5 545.3 L937 548.4 L937.5 556.8 L938 569.4 L938.5 584.3 L939 600.5 L939.5 614.3 L940 623.5 L940.5 626.6 L941 623.3 L941.5 614.1 L942 600.3 L942.5 584 L943 569.3 L943.5 556.8 L944 548.4 L944.5 545.5 L945 548.4 L945.5 556.6 L946 569.1 L946.5 583.8 L947 600 L947.5 613.8 L948 623.1 L948.5 626.4 L949 623.3 L949.5 614.3 L950 600.6 L950.5 584.4 L951 569.7 L951.5 557.2 L952 548.7 L952.5 545.7 L953 548.4 L953.5 556.6 L954 568.9 L954.5 583.5 L955 599.7 L955.5 613.5 L956 622.8 L956.5 626.2 L957 623.3 L957.5 614.3 L958 600.7 L958.5 584.6 L959 569.9 L959.5 557.4 L960 549 L960.5 545.9 L961 548.5 L961.5 556.6 L962 568.8 L962.5 583.4 L963 599.5 L963.5 613.3 L964 622.6 L964.5 626.1 L965 623.1 L965.5 614.2 L966 600.7 L966.5 583.2 L967 565.2 L967.5 539.6 L968 524.3 L968.5 543.4 L969 596.4 L969.5 656.6 L970 689 L970.5 662.4 L971 597.4 L971.5 527.6 L972 481.4 L972.5 480.8 L973 528.1 L973.5 602.6 L974 667.8 L974.5 697.7 L975 680.1 L975.5 622.9 L976 551.9 L976.5 494.4 L977 469.9 L977.5 485 L978 532.2 L978.5 595 L979 653.8 L979.5 691.1 L980 697.5 L980.5 673 L981 625.4 L981.5 568.5 L982 517.2 L982.5 482.7 L983 472.1 L983.5 486.3 L984 521.2 L984.5 568.5 L985 617.2 L985.5 658.1 L986 683.9 L986.5 690.1 L987 676.1 L987.5 645.3 L988 603.7 L988.5 557.7 L989 515.6 L989.5 485.9 L990 473.8 L990.5 481 L991 506 L991.5 544.2 L992 588.5 L992.5 629 L993 661.7 L993.5 681.4 L994 685.2 L994.5 672.8 L995 646.5 L995.5 610.7 L996 570.5 L996.5 532.2 L997 502.4 L997.5 485.5 L998 483.5 L998.5 496.1 L999 521.2 L999.5 554.6 L1000 591.3 L1000.5 625.5 L1001 653.3 L1001.5 671 L1002 676.7 L1002.5 670 L1003 652.2 L1003.5 626 L1004 594.9 L1004.5 563.4 L1005 535.3 L1005.5 514.1 L1006 501.9 L1006.5 499.9 L1007 507.9 L1007.5 524.5 L1008 547.4 L1008.5 573.7 L1009 599.4 L1009.5 621.7 L1010 638.9 L1010.5 649.3 L1011 652.2 L1011.5 647.8 L1012 636.9 L1012.5 621.2 L1013 602.5 L1013.5 583 L1014 563.6 L1014.5 547.4 L1015 535.7 L1015.5 529.3 L1016 528.6 L1016.5 533.6 L1017 543.3 L1017.5 557.5 L1018 572.9 L1018.2 580.9 L1018.5 588.5 L1018.8 593.9 L1019 595.4 L1019.2 596.1 L1019.5 599.8 L1019.8 604.5 L1020 607 L1020.2 608.5 L1020.5 609.2 L1020.8 609.4 L1021 609 L1021.2 608 L1021.5 606.1 L1021.8 603.6 L1022 600.5 L1022.2 596.7 L1022.5 592.5 L1022.8 588 L1023 583.5 L1023.2 580 L1023.5 576.7 L1023.8 573.9 L1024 571.7 L1024.2 570 L1024.5 569 L1024.8 568.6 L1025 568.8 L1025.2 569.4 L1025.5 570.5 L1025.8 571.9 L1026 573.5 L1026.2 575.3 L1026.5 577 L1026.8 578.5 L1027 580.4 L1027.2 585.1 L1027.5 596.1 L1027.8 598.6 L1028 588.1 L1028.2 582 L1028.5 588.2 L1028.8 598.4 L1029 603 L1029.2 604.2 L1029.5 605.2 L1029.8 606 L1030 606.2 L1030.2 605.5 L1030.5 604.1 L1030.8 601.8 L1031 598.7 L1031.2 594.8 L1031.5 590.4 L1031.8 585.6 L1032 581 L1032.2 576.4 L1032.5 572.1 L1032.8 568.1 L1033 564.6 L1033.2 561.8 L1033.5 559.7 L1033.8 558.5 L1034 558.2 L1034.2 558.7 L1034.5 560 L1034.8 562 L1035 564.6 L1035.2 568 L1035.5 571 L1035.8 574.5 L1036 582.8 L1036.2 598.4 L1036.5 605.8 L1036.8 593.2 L1037 581.2 L1037.2 588.8 L1037.5 604.1 L1037.8 611.7 L1038 613.8 L1038.2 615.1 L1038.5 616.2 L1038.8 616.3 L1039 615.4 L1039.2 613.2 L1039.5 609.8 L1039.8 605.3 L1040 599.8 L1040.2 593.4 L1040.5 586.6 L1040.8 580.5 L1041 575.1 L1041.2 570 L1041.5 565.7 L1041.8 562 L1042 559.3 L1042.2 557.6 L1042.5 556.8 L1042.8 557 L1043 558 L1043.2 559.8 L1043.5 562.2 L1043.8 565.2 L1044 568.5 L1044.2 571.5 L1044.5 575 L1044.8 583.3 L1045 599.6 L1045.2 606.3 L1045.5 592.7 L1045.8 582 L1046 590.9 L1046.2 605.5 L1046.5 612.1 L1046.8 613.6 L1047 614.5 L1047.2 615.1 L1047.5 614.7 L1047.8 613.3 L1048 610.7 L1048.2 607.1 L1048.5 602.6 L1048.8 597.3 L1049 591.5 L1049.2 585.4 L1049.5 579.8 L1049.8 574.6 L1050 569.8 L1050.2 565.6 L1050.5 562.3 L1050.8 559.8 L1051 558.2 L1051.2 557.6 L1051.5 557.9 L1051.8 559.1 L1052 560.9 L1052.2 563.4 L1052.5 566.4 L1052.8 569.6 L1053 572.6 L1053.2 576.6 L1053.5 586.4 L1053.8 600.4 L1054 601.5 L1054.2 588 L1054.5 583.5 L1054.8 594.7 L1055 605.7 L1055.2 609.6 L1055.5 610.6 L1055.8 611.3 L1056 611.6 L1056.2 610.9 L1056.5 609.3 L1056.8 606.7 L1057 603.2 L1057.2 598.9 L1057.5 594 L1057.8 588.7 L1058 583.3 L1058.2 578.1 L1058.5 573.2 L1058.8 568.7 L1059 565 L1059.2 562 L1059.5 559.9 L1059.8 558.8 L1060 558.5 L1060.2 559.1 L1060.5 560.5 L1060.8 562.6 L1061 565.2 L1061.2 568.3 L1061.5 571.3 L1061.8 574.3 L1062 580.2 L1062.2 594.5 L1062.5 607.1 L1062.8 598.8 L1063 584.3 L1063.2 590.1 L1063.5 607.9 L1063.8 618.6 L1064 622.3 L1064.2 624.6 L1064.5 626.4 L1064.8 627 L1065 625.7 L1065.2 622.7 L1065.5 617.8 L1065.8 611.1 L1066 603 L1066.5 583.8 L1067 569.4 L1067.5 555.5 L1068 544.7 L1068.5 542 L1069 546.1 L1069.5 556.1 L1070 570 L1070.5 591.9 L1071 608.5 L1071.5 630 L1072 645.1 L1072.5 647.5 L1073 640.1 L1073.5 623.5 L1074 600.6 L1074.5 578.1 L1075 562.1 L1075.5 549.7 L1076 542.9 L1076.5 542.8 L1077 549.1 L1077.5 560.7 L1078 576.2 L1078.5 600.3 L1079 613.7 L1079.5 634.6 L1080 643.1 L1080.5 642.4 L1081 632.5 L1081.5 614.7 L1082 592 L1082.5 572.7 L1083 557.7 L1083.5 546.9 L1084 542.2 L1084.5 544 L1085 552.1 L1085.5 564.9 L1086 582.1 L1086.5 603.7 L1087 618.9 L1087.5 636.4 L1088 641.9 L1088.5 638.7 L1089 626.8 L1089.5 608.1 L1090 585.5 L1090.5 568.5 L1091 554.4 L1091.5 545.1 L1092 542 L1092.5 545.5 L1093 554.9 L1093.5 568.4 L1094 587.9 L1094.5 605.5 L1095 622.8 L1095.5 636.5 L1096 640 L1096.5 634.9 L1097 621.9 L1097.5 602.8 L1098 581.5 L1098.5 565.3 L1099 552.1 L1099.5 544 L1100 542.2 L1100.5 546.7 L1101 557 L1101.5 571.2 L1102 592.1 L1102.5 607.1 L1103 625.3 L1103.5 636.6 L1104 638.8 L1104.5 632.6 L1105 618.7 L1105.5 599.3 L1106 578.9 L1106.5 562.5 L1107 549.5 L1107.5 541.9 L1108 540.8 L1108.5 546.4 L1109 557.7 L1109.5 572.9 L1110 594.7 L1110.5 608.9 L1111 627.3 L1111.5 637.3 L1112 638.5 L1112.5 631.5 L1113 617 L1113.5 597.3 L1114 577.1 L1114.5 560.4 L1115 547.3 L1115.5 540 L1116 539.5 L1116.5 545.7 L1117 557.7 L1117.5 573.7 L1118 595.8 L1118.5 609.9 L1119 628.2 L1119.5 637.5 L1120 638.4 L1120.5 630.9 L1121 616.2 L1121.5 596.5 L1122 576.2 L1122.5 559.1 L1123 545.8 L1123.5 538.4 L1124 537.9 L1124.5 544.5 L1125 556.9 L1125.5 573.5 L1126 595.7 L1126.5 610.1 L1127 628.2 L1127.5 637.5 L1128 638.4 L1128.5 631.1 L1129 616.5 L1129.5 596.9 L1130 576.4 L1130.5 558.7 L1131 544.8 L1131.5 537 L1132 536.2 L1132.5 542.7 L1133 555.3 L1133.5 572.1 L1134 594.4 L1134.5 609.4 L1135 627.3 L1135.5 637.2 L1136 638.6 L1136.5 631.9 L1137 617.8 L1137.5 598.6 L1138 577.8 L1138.5 559.3 L1139 544.6 L1139.5 535.9 L1140 534.4 L1140.5 540.6 L1141 553.1 L1141.5 569.8 L1142 591.4 L1142.5 606.8 L1143 623.2 L1143.5 633.1 L1144 634.9 L1144.5 629.1 L1145 616.8 L1145.5 599.7 L1146 580.7 L1146.5 562.9 L1147 548.5 L1147.5 539.5 L1148 537.3 L1148.5 542 L1149 552.8 L1149.5 567.9 L1150 586.9 L1150.5 601.4 L1151 614.5 L1151.5 624.3 L1152 627 L1152.5 623.7 L1153 615 L1153.5 602.2 L1154 587.3 L1154.5 572.3 L1155 559.4 L1155.5 550.2 L1156 545.8 L1156.5 546.4 L1157 551.8 L1157.5 560.9 L1158 572.4 L1158.5 586.2 L1159 597.3 L1159.5 606.6 L1160 614.9 L1160.5 618.6 L1161 618.2 L1161.5 613.9 L1162 606.1 L1162.5 595.9 L1163 584.3 L1163.5 573.5 L1164 564.2 L1164.5 557.3 L1165 553.4 L1165.5 552.9 L1166 555.8 L1166.5 561.9 L1167 570.3 L1167.5 580.6 L1168 592.5 L1168.5 602.1 L1169 613.3 L1169.5 620.7 L1170 623.5 L1170.5 621.1 L1171 613.2 L1171.5 600.4 L1172 584.3 L1172.5 570.5 L1173 558.1 L1173.5 549.1 L1174 545 L1174.5 546.9 L1175 554.8 L1175.5 567.8 L1176 585.4 L1176.5 606.8 L1177 627 L1177.5 641.6 L1178 645.6 L1178.5 636 L1179 617 L1179.5 592.5 L1180 571.1 L1180.5 554 L1181 542.8 L1181.5 541.1 L1182 550.2 L1182.5 568.9 L1183 595.1 L1183.5 616.7 L1184 628.9 L1184.5 623.2 L1185 601.1 L1185.5 569.5 L1186 541.5 L1186.5 537 L1187 563.9 L1187.5 611.1 L1188 653.8 L1188.5 652.3 L1189 600.2 L1189.5 545.5 L1190 516.6 L1190.5 527.6 L1191 573.8 L1191.5 645 L1192 692 L1192.5 678.6 L1193 614.7 L1193.5 543.1 L1194 494 L1194.5 487.1 L1195 527.6 L1195.5 600.8 L1196 665.3 L1196.5 698.3 L1197 682.4 L1197.5 627.1 L1198 555.8 L1198.5 496.3 L1199 469.7 L1199.5 483.8 L1200 531.4 L1200.5 597.8 L1201 653.7 L1201.5 692.6 L1202 696.3 L1202.5 667.1 L1203 614.4 L1203.5 554 L1204 502.9 L1204.5 473.8 L1205 473.2 L1205.5 500.2 L1206 547.1 L1206.5 604.1 L1207 650.5 L1207.5 685.7 L1208 695.5 L1208.5 680.5 L1209 644.6 L1209.5 596.1 L1210 544.4 L1210.5 501.1 L1211 475.1 L1211.5 471.3 L1212 489.7 L1212.5 526.2 L1213 573.9 L1213.5 620.5 L1214 658.5 L1214.5 684.4 L1215 691.1 L1215.5 679 L1216 650.6 L1216.5 611.1 L1217 566.7 L1217.5 524.9 L1218 493.5 L1218.5 477.3 L1219 478.2 L1219.5 495.5 L1220 525.8 L1220.5 564.4 L1221 605.7 L1221.5 640.8 L1222 669.7 L1222.5 684.9 L1223 685.3 L1223.5 671.2 L1224 644.6 L1224.5 609.7 L1225 572 L1225.5 537.4 L1226 510.1 L1226.5 493.5 L1227 489.6 L1227.5 498.5 L1228 518.5 L1228.5 546.7 L1229 579.4 L1229.5 606.9 L1230 627.7 L1230.5 641.3 L1231 645.9 L1231.5 642.1 L1232 631.4 L1232.5 616.1 L1233 599 L1233.5 581.4 L1234 556.3 L1234.5 536.1 L1235 522.9 L1235.5 517.8 L1236 521.1 L1236.5 531.8 L1237 548.5 L1237.5 568.7 L1238 586.8 L1238.5 596.5 L1239 603.8 L1239.5 607.7 L1240 608 L1240.2 608.1 L1240.5 607.3 L1240.8 605.5 L1241 602.9 L1241.2 599.3 L1241.5 594.9 L1241.8 589.8 L1242 591.4 L1242.2 586.1 L1242.5 579.9 L1242.8 573.9 L1243 569.2 L1243.2 565.5 L1243.5 562.6 L1243.8 559.8 L1244 556.9 L1244.2 553.9 L1244.5 551 L1244.8 549.2 L1245 549.1 L1245.2 551.5 L1245.5 556.7 L1245.8 564.5 L1246 574.1 L1246.2 584.6 L1246.5 595.3 L1246.8 604.8 L1247 612.3 L1247.2 617.5 L1247.5 620.5 L1247.8 621.9 L1248 622.2 L1248.2 621.8 L1248.5 620.8 L1248.8 619.2 L1249 616.5 L1249.2 612.3 L1249.5 606.2 L1249.8 598.3 L1250 588.8 L1250.2 579.2 L1250.5 570.6 L1250.8 563.1 L1251 557.5 L1251.2 554.3 L1251.5 553.3 L1251.8 554.3 L1252 556.6 L1252.2 559.3 L1252.5 562.1 L1252.8 564.5 L1253 566.4 L1253.2 568.1 L1253.5 569.8 L1253.8 572 L1254 575 L1254.2 579 L1254.5 583.7 L1254.8 589.4 L1255 594.9 L1255.2 599.5 L1255.5 602.6 L1255.8 604.1 L1256 604.1 L1256.2 603.1 L1256.5 601.7 L1256.8 600.6 L1257 600.3 L1257.2 601.1 L1257.5 603 L1257.8 605.5 L1258 608 L1258.2 609.6 L1258.5 609.9 L1258.8 608.3 L1259 604.8 L1259.2 599.6 L1259.5 593.3 L1259.8 586.5 L1260 579.9 L1260.2 573.9 L1260.5 568.7 L1260.8 564.4 L1261 560.9 L1261.2 557.7 L1261.5 554.6 L1261.8 551.2 L1262 547.6 L1262.2 544 L1262.5 541.1 L1262.8 539.5 L1263 540.2 L1263.2 543.6 L1263.5 550 L1263.8 559.3 L1264 570.7 L1264.2 583.4 L1264.5 594.7 L1264.8 604.8 L1265 613.1 L1265.2 619.2 L1265.5 623.2 L1265.8 625.3 L1266 626 L1266.2 625.9 L1266.5 625.1 L1266.8 623.9 L1267 621.8 L1267.2 618.6 L1267.5 613.7 L1267.8 606.8 L1268 598 L1268.2 587.8 L1268.5 576.5 L1268.8 565.6 L1269 556.2 L1269.2 549.4 L1269.5 545.6 L1269.8 544.8 L1270 546.5 L1270.2 549.7 L1270.5 553.7 L1270.8 557.5 L1271 560.8 L1271.2 563.4 L1271.5 565.7 L1271.8 568.2 L1272 571.6 L1272.2 576 L1272.5 581.6 L1272.8 587.8 L1273 594 L1273.2 599.2 L1273.5 602.8 L1273.8 604.3 L1274 604.1 L1274.2 602.8 L1274.5 601.2 L1274.8 600.3 L1275 600.6 L1275.2 602.4 L1275.5 605 L1275.8 607.8 L1276 609.5 L1276.2 609.2 L1276.5 606.4 L1276.8 601.2 L1277 594.1 L1277.2 586.2 L1277.5 578.6 L1277.8 571.9 L1278 566.6 L1278.2 562.4 L1278.5 559 L1278.8 555.7 L1279 552 L1279.2 548.3 L1279.5 545 L1279.8 543.3 L1280 544.3 L1280.2 548.8 L1280.5 556.9 L1280.8 568.1 L1281 581 L1281.2 594.1 L1281.5 605.7 L1281.8 614.7 L1282 620.8 L1282.2 624.2 L1282.5 625.4 L1282.8 625.4 L1283 624.6 L1283.2 623 L1283.5 620.4 L1283.8 615.9 L1284 609.2 L1284.2 600 L1284.5 588.7 L1284.8 576.4 L1285 564.7 L1285.2 555 L1285.5 548.5 L1285.8 545.7 L1286 546.3 L1286.2 549.3 L1286.5 553.4 L1286.8 557.5 L1287 561 L1287.2 563.6 L1287.5 566.1 L1287.8 569.1 L1288 573.3 L1288.2 578.9 L1288.5 585.6 L1288.8 592.3 L1289 598.2 L1289.2 602.3 L1289.5 604.1 L1289.8 603.9 L1290 602.4 L1290.2 600.8 L1290.5 600.1 L1290.8 600.9 L1291 603.2 L1291.2 606.1 L1291.5 608.7 L1291.8 609.5 L1292 607.8 L1292.2 603.3 L1292.5 596.5 L1292.8 588.4 L1293 580.2 L1293.2 573 L1293.5 567.3 L1293.8 562.9 L1294 559.3 L1294.2 555.9 L1294.5 552.3 L1294.8 548.5 L1295 545.2 L1295.2 543.5 L1295.5 544.6 L1295.8 549.3 L1296 557.6 L1296.2 569 L1296.5 582.1 L1296.8 595.3 L1297 607.1 L1297.2 616.1 L1297.5 622.1 L1297.8 625.2 L1298 626.3 L1298.2 626.2 L1298.5 625.2 L1298.8 623.5 L1299 620.5 L1299.2 615.4 L1299.5 607.8 L1299.8 597.7 L1300 585.6 L1300.2 573.4 L1300.5 562.3 L1300.8 553.6 L1301 548.4 L1301.2 546.9 L1301.5 548.5 L1301.8 551.9 L1302 556.1 L1302.2 559.9 L1302.5 563 L1302.8 565.4 L1303 568 L1303.2 571.4 L1303.5 576 L1303.8 582 L1304 589 L1304.2 595.9 L1304.5 601.3 L1304.8 604.4 L1305 605.1 L1305.2 604.1 L1305.5 602.3 L1305.8 601 L1306 601.1 L1306.2 603 L1306.5 606 L1306.8 609 L1307 610.7 L1307.2 609.9 L1307.5 606.1 L1307.8 599.6 L1308 591.3 L1308.2 582.7 L1308.5 575.4 L1308.8 569.5 L1309 565 L1309.2 561.4 L1309.5 558.2 L1309.8 554.8 L1310 551.1 L1310.2 547.9 L1310.5 546 L1310.8 546.6 L1311 550.6 L1311.2 558.1 L1311.5 568.6 L1311.8 580.9 L1312 594.6 L1312.2 607.3 L1312.5 617.1 L1312.8 623.6 L1313 627.1 L1313.2 628.3 L1313.5 628.2 L1313.8 627.2 L1314 625.3 L1314.2 622.1 L1314.5 616.6 L1314.8 608.4 L1315 597.5 L1315.2 584.6 L1315.5 573.4 L1315.8 563.5 L1316 556.1 L1316.2 551.9 L1316.5 551.1 L1316.8 552.9 L1317 556.2 L1317.2 560 L1317.5 563.4 L1317.8 566 L1318 568.2 L1318.2 570.6 L1318.5 573.9 L1318.8 578.4 L1319 583.9 L1319.2 591.5 L1319.5 598.4 L1319.8 603.4 L1320 605.9 L1320.2 605.8 L1320.5 604.1 L1320.8 602.2 L1321 601.3 L1321.2 602 L1321.5 604.4 L1321.8 607.6 L1322 610.1 L1322.2 610.6 L1322.5 608.3 L1322.8 603 L1323 595.4 L1323.2 586.7 L1323.5 579.6 L1323.8 574.1 L1324 569.9 L1324.2 566.7 L1324.5 564 L1324.8 561.3 L1325 558.5 L1325.2 555.6 L1325.5 553.6 L1325.8 553.3 L1326 555.5 L1326.2 560.8 L1326.5 568.7 L1326.8 578.4 L1327 590 L1327.2 601.9 L1327.5 611.4 L1327.8 617.9 L1328 621.4 L1328.2 622.6 L1328.5 622.5 L1328.8 621.5 L1329 619.8 L1329.2 617.1 L1329.5 612.5 L1329.8 605.7 L1330 596.6 L1330.2 585.8 L1330.5 576.4 L1330.8 568.3 L1331 562.1 L1331.2 558.5 L1331.5 557.7 L1331.8 559.1 L1332 561.8 L1332.2 564.9 L1332.5 567.6 L1332.8 569.7 L1333 571.5 L1333.2 573.5 L1333.5 576.2 L1333.8 579.8 L1334 584.4 L1334.2 590.2 L1334.5 595.3 L1334.8 598.8 L1335 600.3 L1335.2 599.9 L1335.5 598.6 L1335.8 597.2 L1336 596.7 L1336.2 597.5 L1336.5 599.5 L1336.8 601.8 L1337 603.3 L1337.2 603.2 L1337.5 600.8 L1337.8 596.3 L1338 590.4 L1338.2 584 L1338.5 579 L1338.8 575 L1339 571.9 L1339.2 569.5 L1339.5 567.5 L1339.8 565.3 L1340 562.9 L1340.2 560.9 L1340.5 559.7 L1340.8 560.4 L1341 563.2 L1341.2 568.5 L1341.5 575.6 L1341.8 583.7 L1342 592.5 L1342.2 599.8 L1342.5 605.1 L1342.8 608.2 L1343 609.5 L1343.2 609.5 L1343.5 608.9 L1343.8 607.8 L1344 606.1 L1344.2 603.5 L1344.5 599.5 L1344.8 594 L1345 587.4 L1345.2 580.2 L1345.5 573.5 L1345.8 568.1 L1346 564.7 L1346.2 563.6 L1346.5 564.3 L1346.8 566.3 L1347 568.7 L1347.2 570.9 L1347.5 572.7 L1347.8 574.1 L1348 575.6 L1348.2 577.7 L1348.5 580.5 L1348.8 583.8 L1349 587 L1349.2 589.8 L1349.5 591.7 L1349.8 592.5 L1350 592.3 L1350.2 591.5 L1350.5 590.7 L1350.8 590.3 L1351 590.7 L1351.2 591.5 L1351.5 592.5 L1351.8 593.1 L1352 592.9 L1352.2 591.7 L1352.5 589.5 L1352.8 586.6 L1353 583.8 L1353.2 581.9 L1353.5 580.6 L1353.8 579.7 L1354 579.3 L1354.2 576.4 L1354.5 576.9 L1354.8 577.6 L1355 578.6 L1355.2 578.4 L1355.5 578.8 L1355.8 580 L1356 582.1 L1356.5 590.6 L1357 604 L1357.5 614 L1358 613.1 L1358.5 598.7 L1359 575.6 L1359.5 549.3 L1360 526.1 L1360.5 516.5 L1361 527.3 L1361.5 561.7 L1362 599.8 L1362.5 634.5 L1363 660 L1363.5 670.1 L1364 662.2 L1364.5 637.5 L1365 600.5 L1365.5 562.9 L1366 532.1 L1366.5 510.3 L1367 501.1 L1367.5 506 L1368 524.2 L1368.5 552.4 L1369 586.3 L1369.5 622.5 L1370 650.8 L1370.5 667.1 L1371 669.3 L1371.5 657.9 L1372 635.3 L1372.5 605.8 L1373 574.2 L1373.5 544.8 L1374 522 L1374.5 509.2 L1375 508.1 L1375.5 518.6 L1376 538.9 L1376.5 565.5 L1377 593.9 L1377.5 619.3 L1378 638.9 L1378.5 650.1 L1379 651.4 L1379.5 642.9 L1380 626 L1380.5 603.5 L1381 578.2 L1381.5 552.2 L1382 531 L1382.5 517.4 L1383 513.2 L1383.5 519 L1384 533.6 L1384.5 555.1 L1385 580.3 L1385.5 603.5 L1386 623.6 L1386.5 638.2 L1387 645.4 L1387.5 644.5 L1388 635.6 L1388.5 619.9 L1389 599.7 L1389.5 576.9 L1390 553.7 L1390.5 534.8 L1391 522.3 L1391.5 517.7 L1392 521.6"/></defs>
<use href="#wv" fill="none" stroke="#1787b3" stroke-width="1.55" stroke-linejoin="round"/>
<use href="#wv" fill="none" stroke="#2fb6e3" stroke-width=".75" stroke-linejoin="round"/>
</g></svg>

<!-- ===== LEFT PANELS ===== -->
<div class="a" style="left:239px;top:418.7px;width:219.5px;height:234.3px;border-radius:10px 10px 0 0;background:linear-gradient(180deg,#26303c 0%,#212a35 40%,#1a212a 100%)"></div>
<svg style="left:290.5px;top:435px" width="22" height="22" viewBox="0 0 22 22"><circle cx="11" cy="11" r="9.2" fill="none" stroke="#1fb2e0" stroke-width="1.4"/><rect x="9.3" y="6.3" width="3.4" height="9.4" rx="1.7" fill="#1fb2e0"/></svg>
<div class="tl" style="left:319px;top:445.5px;font-size:15.7px;font-weight:700">Balance</div>
<div class="a" style="left:254.5px;top:467.5px;width:188.5px;height:19px;border-radius:10px;background:#0f121a"></div>
<div class="a" style="left:311.5px;top:470px;width:1px;height:14.5px;background:#343e4a"></div><div class="a" style="left:385px;top:470px;width:1px;height:14.5px;background:#343e4a"></div>
<div class="a" style="left:351.3px;top:470.5px;width:13px;height:13px;border-radius:50%;background:#20b0dd"></div>
<div class="tl" style="left:245.5px;top:499.8px;font-size:14.5px">Light</div>
<div class="tr" style="left:455px;top:499.8px;font-size:14.1px">Heavy</div>
<div class="a" style="left:239px;top:655.5px;width:219.5px;height:233.5px;border-radius:0 0 11px 11px;border:1px solid #27303b;border-top-color:#1f2730;background:linear-gradient(180deg,#171c25 0%,#12161e 50%,#0d1017 100%)"></div>
<svg style="left:290.7px;top:672.5px" width="22" height="22" viewBox="0 0 22 22"><circle cx="11" cy="11" r="9.2" fill="none" stroke="#1fb2e0" stroke-width="1.4"/><rect x="9.3" y="6.3" width="3.4" height="9.4" rx="1.7" fill="#1fb2e0"/></svg>
<div class="tl" style="left:325.5px;top:683px;font-size:15.7px;font-weight:700">Punch</div>
<div class="a" style="left:263.5px;top:705px;width:170.5px;height:19px;border-radius:10px;background:#0c0f15"></div>
<div class="a" style="left:311.5px;top:707px;width:1px;height:15px;background:#2c3540"></div><div class="a" style="left:385px;top:707px;width:1px;height:15px;background:#2c3540"></div>
<div class="a" style="left:323px;top:707.8px;width:13px;height:13px;border-radius:50%;background:#20b0dd"></div>
<svg style="left:245px;top:706px" width="13" height="16" viewBox="0 0 13 16" fill="none" stroke="#aab2ba" stroke-width="1.1"><path d="M1 .5v15M3.8 .5v15M6.6 .5v15M9.4 .5v15M12.2 .5v15"/></svg>
<svg style="left:439.5px;top:705.5px" width="14" height="17" viewBox="0 0 14 17" fill="none" stroke="#aab2ba" stroke-width="1.1" stroke-linecap="round"><path d="M.8 7.5v2M3.3 5.5v6M5.8 2.5v12M8.3 .8v15.4M10.8 5v7M13.2 7.3v2.4"/></svg>
<svg style="left:0;top:0" width="1920" height="1080" viewBox="0 0 1920 1080">
<defs><radialGradient id="kbo" cx="50%" cy="50%" r="50%"><stop offset=".8" stop-color="#181e26"/><stop offset="1" stop-color="#1b222b"/></radialGradient>
<linearGradient id="kbr" x1="0" y1="0" x2="0" y2="1"><stop offset="0" stop-color="#84929a"/><stop offset=".5" stop-color="#6d7a83"/><stop offset="1" stop-color="#58656e"/></linearGradient>
<radialGradient id="kbi" cx="50%" cy="35%" r="70%"><stop offset="0" stop-color="#2a323b"/><stop offset=".6" stop-color="#1a2028"/><stop offset="1" stop-color="#10141a"/></radialGradient>
<filter id="kbg" x="-30%" y="-30%" width="160%" height="160%"><feGaussianBlur stdDeviation="2.2"/></filter></defs>
<circle cx="348.6" cy="562.8" r="63.8" fill="url(#kbo)" stroke="#28323d" stroke-width="1"/>
<circle cx="348.6" cy="564.3" r="55.5" fill="#0b0e13" opacity=".55"/>
<circle cx="348.6" cy="562.8" r="53.2" fill="url(#kbr)"/>
<circle cx="348.6" cy="562.8" r="41.2" fill="url(#kbi)"/>
<path d="M348.6 500.6A62.2 62.2 0 0 0 309.46 514.46" fill="none" stroke="#21b4e2" stroke-width="6" stroke-linecap="round" opacity=".6" filter="url(#kbg)"/>
<path d="M348.6 500.6A62.2 62.2 0 0 0 309.46 514.46" fill="none" stroke="#21b4e2" stroke-width="4.3" stroke-linecap="round"/>
</svg>
<div class="t" style="left:348.6px;top:562.8px;font-size:15.5px">-2.8 dB</div>
<svg style="left:0;top:0" width="1920" height="1080" viewBox="0 0 1920 1080">
<defs><radialGradient id="kpo" cx="50%" cy="50%" r="50%"><stop offset=".8" stop-color="#181e26"/><stop offset="1" stop-color="#1b222b"/></radialGradient>
<linearGradient id="kpr" x1="0" y1="0" x2="0" y2="1"><stop offset="0" stop-color="#84929a"/><stop offset=".5" stop-color="#6d7a83"/><stop offset="1" stop-color="#58656e"/></linearGradient>
<radialGradient id="kpi" cx="50%" cy="35%" r="70%"><stop offset="0" stop-color="#2a323b"/><stop offset=".6" stop-color="#1a2028"/><stop offset="1" stop-color="#10141a"/></radialGradient>
<filter id="kpg" x="-30%" y="-30%" width="160%" height="160%"><feGaussianBlur stdDeviation="2.2"/></filter></defs>
<circle cx="348.7" cy="802.5" r="63.8" fill="url(#kpo)" stroke="#29323d" stroke-width="1"/>
<circle cx="348.7" cy="804" r="55.5" fill="#0b0e13" opacity=".55"/>
<circle cx="348.7" cy="802.5" r="53.2" fill="url(#kpr)"/>
<circle cx="348.7" cy="802.5" r="41.2" fill="url(#kpi)"/>
<path d="M348.7 740.3A62.2 62.2 0 0 1 407.86 783.28" fill="none" stroke="#21b4e2" stroke-width="6" stroke-linecap="round" opacity=".6" filter="url(#kpg)"/>
<path d="M348.7 740.3A62.2 62.2 0 0 1 407.86 783.28" fill="none" stroke="#21b4e2" stroke-width="4.3" stroke-linecap="round"/>
</svg>
<div class="t" style="left:348.7px;top:802.5px;font-size:15.5px">+4.8 dB</div>

<!-- ===== BOTTOM CONTROLS ===== -->
<svg style="left:567.7px;top:765.3px" width="22" height="22" viewBox="0 0 22 22"><circle cx="11" cy="11" r="9.2" fill="none" stroke="#1fb2e0" stroke-width="1.4"/><rect x="9.3" y="6.3" width="3.4" height="9.4" rx="1.7" fill="#1fb2e0"/></svg>
<div class="tl" style="left:597px;top:776px;font-size:15.7px;font-weight:700">Sustain Power</div>
<div class="tl" style="left:549.5px;top:811.8px;font-size:15.4px">Threshold</div>
<div class="vbox" style="left:638px;top:795.5px;width:92.5px;height:32px;line-height:30px">-17.5 dB</div>
<div class="a" style="left:548px;top:844px;width:184.5px;height:14px;border-radius:7px;background:#181d26;border:1px solid #28303b"></div>
<div class="a" style="left:640px;top:844px;width:38px;height:14px;background:linear-gradient(180deg,#2bbcea,#1898c6)"></div>
<div class="a" style="left:667.7px;top:841.5px;width:19.5px;height:19.5px;border-radius:50%;background:radial-gradient(circle at 50% 30%,#ffffff 0%,#e9ecee 45%,#b4babf 100%);box-shadow:0 1px 3px rgba(0,0,0,.6)"></div><div class="a" style="left:674.2px;top:848px;width:6.5px;height:6.5px;border-radius:50%;background:#1a93be"></div>
<div class="tl" style="left:543.5px;top:875px;font-size:15.6px">Dirty</div>
<div class="tr" style="left:735.5px;top:875px;font-size:15.3px">Clean</div>
<svg style="left:0;top:0" width="1920" height="1080" viewBox="0 0 1920 1080">
<defs><radialGradient id="k3i" cx="50%" cy="35%" r="75%"><stop offset="0" stop-color="#46525e"/><stop offset=".7" stop-color="#343f4a"/><stop offset="1" stop-color="#2b343e"/></radialGradient>
<linearGradient id="k3m" x1="0" y1="0" x2="0" y2="1"><stop offset="0" stop-color="#3a4551"/><stop offset="1" stop-color="#222a33"/></linearGradient>
<filter id="k3g" x="-30%" y="-30%" width="160%" height="160%"><feGaussianBlur stdDeviation="2"/></filter></defs>
<circle cx="802" cy="823.3" r="46.5" fill="#12161d" stroke="#1f2630" stroke-width="1"/>
<circle cx="802" cy="823.3" r="38.8" fill="url(#k3m)" stroke="#171c23" stroke-width="1"/>
<circle cx="802" cy="823.3" r="31.2" fill="url(#k3i)" stroke="#414c58" stroke-width=".8"/>
<path d="M771.38 853.92A43.3 43.3 0 0 1 773.88 790.37" fill="none" stroke="#21b4e2" stroke-width="6" stroke-linecap="round" opacity=".6" filter="url(#k3g)"/>
<path d="M771.38 853.92A43.3 43.3 0 0 1 773.88 790.37" fill="none" stroke="#23b6e4" stroke-width="4" stroke-linecap="round"/>
</svg>
<div class="t" style="left:802px;top:823.3px;font-size:15.5px">35%</div>
<div class="a" style="left:880px;top:769.5px;width:17px;height:82px;border-radius:8.5px;background:#191e27;border:1px solid #252d38;overflow:hidden"><div class="a" style="left:-1px;bottom:-1px;width:17px;height:7px;background:#22b2e0"></div></div>
<div class="t" style="left:889px;top:875.8px;font-size:14.2px">+0.7 dB</div>
<div class="a" style="left:974px;top:768px;width:1px;height:114px;background:linear-gradient(180deg,rgba(40,50,62,0),#27313c 25%,#27313c 75%,rgba(40,50,62,0))"></div>
<svg style="left:1081px;top:765.7px" width="22" height="22" viewBox="0 0 22 22"><circle cx="11" cy="11" r="9.2" fill="none" stroke="#1fb2e0" stroke-width="1.4"/><rect x="9.3" y="6.3" width="3.4" height="9.4" rx="1.7" fill="#1fb2e0"/></svg>
<div class="tl" style="left:1111px;top:776.5px;font-size:15.8px;font-weight:700">Peak Control</div>
<div class="tl" style="left:1057.5px;top:812.5px;font-size:15.4px">Threshold</div>
<div class="vbox" style="left:1145.5px;top:797px;width:92.5px;height:31.5px;line-height:29.5px">-11.0 dB</div>
<div class="a" style="left:1057.5px;top:843px;width:182.5px;height:14px;border-radius:7px;background:#181d26;border:1px solid #28303b"></div>
<div class="a" style="left:1108px;top:843px;width:40.8px;height:14px;background:linear-gradient(180deg,#2bbcea,#1898c6)"></div>
<div class="a" style="left:1097.7px;top:840.3px;width:19.5px;height:19.5px;border-radius:50%;background:radial-gradient(circle at 50% 30%,#ffffff 0%,#e9ecee 45%,#b4babf 100%);box-shadow:0 1px 3px rgba(0,0,0,.6)"></div><div class="a" style="left:1104.2px;top:846.8px;width:6.5px;height:6.5px;border-radius:50%;background:#1a93be"></div>
<div class="tl" style="left:1054px;top:875px;font-size:15.6px">Dirty</div>
<div class="tr" style="left:1243.5px;top:875px;font-size:15.3px">Clean</div>
<div class="a" style="left:1275.5px;top:769.5px;width:17px;height:82px;border-radius:8.5px;background:#191e27;border:1px solid #252d38;overflow:hidden"><div class="a" style="left:-1px;top:-1px;width:17px;height:3.5px;background:#22b2e0"></div></div>
<div class="t" style="left:1286.5px;top:875.8px;font-size:14.2px">-0.3 dB</div>

<!-- ===== RIGHT I/O PANEL ===== -->
<div class="a" style="left:1392px;top:248px;width:288.5px;height:640.5px;border-radius:11px;border:1px solid #2b3642;border-top-color:#28333f;border-left-color:#25303b;background:linear-gradient(180deg,#28333f 0%,#222c37 30%,#1a222b 62%,#12171f 100%)"></div>
<div class="a" style="left:1433px;top:268.8px;width:13px;height:1.5px;background:#5d6872"></div><div class="a" style="left:1477px;top:268.8px;width:13px;height:1.5px;background:#5d6872"></div>
<svg style="left:1453px;top:265px" width="17" height="9" viewBox="0 0 17 9"><path d="M.5 .8h16L8.5 8.5z" fill="#5d6872"/></svg>
<div class="a" style="left:1581.5px;top:268.8px;width:13px;height:1.5px;background:#5d6872"></div><div class="a" style="left:1625px;top:268.8px;width:13px;height:1.5px;background:#5d6872"></div>
<svg style="left:1601.5px;top:265px" width="17" height="9" viewBox="0 0 17 9"><path d="M.5 8.2h16L8.5 .5z" fill="#5d6872"/></svg>
<div class="pill" style="left:1515.5px;top:257.3px;width:42px;height:26.2px;border:1px solid #8e979f"></div>
<div class="t" style="left:1536.5px;top:270.8px;font-size:13px;color:#aab2b9;letter-spacing:.3px;word-spacing:-1px">I / O</div>
<div class="t" style="left:1437.5px;top:296.3px;font-size:14.8px;color:#f2f4f6;letter-spacing:0.75px">−3.3</div>
<div class="t" style="left:1482.5px;top:296.3px;font-size:14.8px;color:#f2f4f6;letter-spacing:0.75px">−3.5</div>
<div class="t" style="left:1536px;top:296.2px;font-size:14.3px;color:#f2f4f6;letter-spacing:0.2px">Peak</div>
<div class="t" style="left:1585.5px;top:296.3px;font-size:14.8px;color:#f2f4f6;letter-spacing:0.75px">−0.1</div>
<div class="t" style="left:1630.5px;top:296.3px;font-size:14.8px;color:#f2f4f6;letter-spacing:0.75px">−0.1</div>
<div class="t" style="left:1437.8px;top:322.3px;font-size:14.8px;color:#7d8994;letter-spacing:1.2px">−11.2</div>
<div class="t" style="left:1483px;top:322.3px;font-size:14.8px;color:#7d8994;letter-spacing:1.2px">−11.6</div>
<div class="t" style="left:1536.5px;top:322.3px;font-size:14.5px;color:#7d8994;letter-spacing:0.5px">RMS</div>
<div class="t" style="left:1585.5px;top:322.3px;font-size:14.8px;color:#7d8994;letter-spacing:0.75px">−4.7</div>
<div class="t" style="left:1630.5px;top:322.3px;font-size:14.8px;color:#7d8994;letter-spacing:0.75px">−5.1</div>
<div class="a" style="left:1414px;top:343.5px;width:19.3px;height:333px;border-radius:10px;background:#0f131a"></div>
<div class="a" style="left:1414px;top:436.8px;width:19.3px;height:50.5px;border-radius:10px;background:linear-gradient(180deg,#475060 0%,#394250 50%,#2b3340 100%);border:1px solid #535d6c"></div>
<div class="a" style="left:1418px;top:460.2px;width:11.3px;height:3px;border-radius:1.5px;background:#fff"></div>
<div class="a" style="left:1490px;top:343.5px;width:19.3px;height:333px;border-radius:10px;background:#0f131a"></div>
<div class="a" style="left:1490px;top:436.8px;width:19.3px;height:50.5px;border-radius:10px;background:linear-gradient(180deg,#475060 0%,#394250 50%,#2b3340 100%);border:1px solid #535d6c"></div>
<div class="a" style="left:1494px;top:460.2px;width:11.3px;height:3px;border-radius:1.5px;background:#fff"></div>
<div class="a" style="left:1562px;top:343.5px;width:19.3px;height:333px;border-radius:10px;background:#0f131a"></div>
<div class="a" style="left:1562px;top:436.8px;width:19.3px;height:50.5px;border-radius:10px;background:linear-gradient(180deg,#475060 0%,#394250 50%,#2b3340 100%);border:1px solid #535d6c"></div>
<div class="a" style="left:1566px;top:460.2px;width:11.3px;height:3px;border-radius:1.5px;background:#fff"></div>
<div class="a" style="left:1638px;top:343.5px;width:19.3px;height:333px;border-radius:10px;background:#0f131a"></div>
<div class="a" style="left:1638px;top:436.8px;width:19.3px;height:50.5px;border-radius:10px;background:linear-gradient(180deg,#475060 0%,#394250 50%,#2b3340 100%);border:1px solid #535d6c"></div>
<div class="a" style="left:1642px;top:460.2px;width:11.3px;height:3px;border-radius:1.5px;background:#fff"></div>
<div class="a" style="left:1442.3px;top:336px;width:18.3px;height:341.5px;background:#2a3540"></div><div class="a" style="left:1442.3px;top:350.5px;width:18.3px;height:1px;background:#333e4a"></div><div class="a" style="left:1442.3px;top:408px;width:18.3px;height:29.399999999999977px;background:#45525c;border-top:2.5px solid #596770"></div><div class="a" style="left:1442.3px;top:437.4px;width:18.3px;height:240.10000000000002px;background:#74838d;border-top:1px solid #1a2028"></div><div class="a" style="left:1441.8px;top:375.5px;width:19.3px;height:7.5px;background:#7f8d98;border:1px solid #141920"></div>
<div class="a" style="left:1462.8px;top:336px;width:18.4px;height:341.5px;background:#2a3540"></div><div class="a" style="left:1462.8px;top:350.5px;width:18.4px;height:1px;background:#333e4a"></div><div class="a" style="left:1462.8px;top:406px;width:18.4px;height:35px;background:#45525c;border-top:2.5px solid #596770"></div><div class="a" style="left:1462.8px;top:441px;width:18.4px;height:236.5px;background:#74838d;border-top:1px solid #1a2028"></div><div class="a" style="left:1462.3px;top:373.8px;width:19.4px;height:7.5px;background:#7f8d98;border:1px solid #141920"></div>
<div class="a" style="left:1590.3px;top:336px;width:18.3px;height:341.5px;background:#2a3540"></div><div class="a" style="left:1590.3px;top:350.5px;width:18.3px;height:1px;background:#333e4a"></div><div class="a" style="left:1590.3px;top:378.3px;width:18.3px;height:16.099999999999966px;background:#45525c;border-top:2.5px solid #596770"></div><div class="a" style="left:1590.3px;top:394.4px;width:18.3px;height:283.1px;background:#74838d;border-top:1px solid #1a2028"></div><div class="a" style="left:1589.8px;top:349px;width:19.3px;height:7.5px;background:#7f8d98;border:1px solid #141920"></div>
<div class="a" style="left:1610.9px;top:336px;width:18.6px;height:341.5px;background:#2a3540"></div><div class="a" style="left:1610.9px;top:350.5px;width:18.6px;height:1px;background:#333e4a"></div><div class="a" style="left:1610.9px;top:378.3px;width:18.6px;height:18.899999999999977px;background:#45525c;border-top:2.5px solid #596770"></div><div class="a" style="left:1610.9px;top:397.2px;width:18.6px;height:280.3px;background:#74838d;border-top:1px solid #1a2028"></div><div class="a" style="left:1610.4px;top:349px;width:19.6px;height:7.5px;background:#7f8d98;border:1px solid #141920"></div>
<div class="t" style="left:1534.5px;top:351.5px;font-size:13.5px;color:#77838e;letter-spacing:.7px">0</div>
<div class="t" style="left:1534.5px;top:372.5px;font-size:13.5px;color:#77838e;letter-spacing:.7px">−3</div>
<div class="t" style="left:1534.5px;top:394.5px;font-size:13.5px;color:#77838e;letter-spacing:.7px">−6</div>
<div class="t" style="left:1534.5px;top:421.3px;font-size:13.5px;color:#77838e;letter-spacing:.7px">−10</div>
<div class="t" style="left:1534.5px;top:456.3px;font-size:13.5px;color:#77838e;letter-spacing:.7px">−15</div>
<div class="t" style="left:1534.5px;top:491.2px;font-size:13.5px;color:#77838e;letter-spacing:.7px">−20</div>
<div class="t" style="left:1534.5px;top:555.5px;font-size:13.5px;color:#77838e;letter-spacing:.7px">−30</div>
<div class="t" style="left:1534.5px;top:611px;font-size:13.5px;color:#77838e;letter-spacing:.7px">−40</div>
<div class="t" style="left:1534.5px;top:648.3px;font-size:13.5px;color:#77838e;letter-spacing:.7px">−50</div>
<div class="t" style="left:1534.5px;top:678px;font-size:13.5px;color:#77838e;letter-spacing:.7px">−Inf</div>
<div class="t" style="left:1439px;top:699px;font-size:13.8px;color:#b8c0c7;letter-spacing:.8px">0.0</div>
<div class="t" style="left:1484.3px;top:699px;font-size:13.8px;color:#b8c0c7;letter-spacing:.8px">0.0</div>
<div class="t" style="left:1587.7px;top:699px;font-size:13.8px;color:#b8c0c7;letter-spacing:.8px">0.0</div>
<div class="t" style="left:1632.7px;top:699px;font-size:13.8px;color:#b8c0c7;letter-spacing:.8px">0.0</div>
<svg style="left:1448px;top:713.5px" width="27" height="14" viewBox="0 0 27 14" fill="none" stroke="#dfe4e8" stroke-width="1.4" stroke-linecap="round"><path d="M11.5 1H7a6 6 0 0 0 0 12h4.5M15.5 1H20a6 6 0 0 1 0 12h-4.5"/><path d="M9 7h9" stroke-width="2.2"/></svg>
<svg style="left:1596.5px;top:713.5px" width="27" height="14" viewBox="0 0 27 14" fill="none" stroke="#dfe4e8" stroke-width="1.4" stroke-linecap="round"><path d="M11.5 1H7a6 6 0 0 0 0 12h4.5M15.5 1H20a6 6 0 0 1 0 12h-4.5"/><path d="M9 7h9" stroke-width="2.2"/></svg>
<div class="a" style="left:1510.5px;top:709px;width:23px;height:23px;border-radius:3px;background:#39424f;border:1px solid #465060"></div><div class="a" style="left:1516px;top:720px;width:12px;height:1.3px;background:#e4e8ec"></div>
<div class="a" style="left:1537.5px;top:709px;width:23px;height:23px;border-radius:3px;background:#39424f;border:1px solid #465060"></div><div class="a" style="left:1542px;top:720px;width:14.5px;height:1.3px;background:#e4e8ec"></div><div class="a" style="left:1548.6px;top:713px;width:1.3px;height:15px;background:#e4e8ec"></div>
<div class="btn" style="left:1416.5px;top:742px;width:118px;height:39px;line-height:39px;border-radius:20px 0 0 20px;background:linear-gradient(135deg,#3e4754 0%,#343d49 100%);font-size:14px">Bypass</div>
<div class="btn" style="left:1536px;top:742px;width:119px;height:39px;line-height:39px;border-radius:0 20px 20px 0;background:linear-gradient(135deg,#3e4754 0%,#343d49 100%);border-left:1px solid #4b5563;padding-right:3px;font-size:14.2px">Gain Match</div>
<div class="btn" style="left:1416.5px;top:790px;width:56.5px;height:39px;border-radius:20px 0 0 20px;background:linear-gradient(135deg,#3e4754 0%,#343d49 100%)"></div>
<div class="btn" style="left:1474.5px;top:790px;width:57px;height:39px;border-radius:0 20px 20px 0;background:linear-gradient(135deg,#3e4754 0%,#343d49 100%);border-left:1px solid #4b5563"></div>
<svg style="left:1431px;top:798px" width="28" height="22" viewBox="0 0 28 22" fill="none" stroke="#eef1f3" stroke-width="1.4"><circle cx="9.8" cy="11" r="8.3"/><circle cx="17.8" cy="11" r="8.3"/></svg>
<svg style="left:1489px;top:803.5px" width="28" height="12" viewBox="0 0 28 12"><path d="M0.5 6L8 .8v3.9h12V.8L27.5 6 20 11.2V7.3H8v3.9z" fill="#eef1f3"/></svg>
<div class="btn" style="left:1540px;top:789px;width:39px;height:39px;border-radius:20px 0 0 20px;background:#29313c"></div>
<div class="btn" style="left:1580.5px;top:789px;width:74.5px;height:39px;line-height:38px;border-radius:0 20px 20px 0;background:linear-gradient(135deg,#3e4754 0%,#343d49 100%);border-left:1px solid #4b5563;font-size:13px;letter-spacing:-.35px;padding-right:1px">Reference</div>
<svg style="left:1550.3px;top:796.5px" width="22" height="22" viewBox="0 0 22 22"><circle cx="11" cy="11" r="9.2" fill="none" stroke="#66707a" stroke-width="1.3"/><rect x="9.4" y="6.3" width="3.2" height="9.4" rx="1.6" fill="#66707a"/></svg>
<div class="btn" style="left:1416.5px;top:836.5px;width:38.5px;height:39px;border-radius:20px 0 0 20px;background:linear-gradient(135deg,#3e4754 0%,#343d49 100%)"></div>
<div class="btn" style="left:1456px;top:836.5px;width:75.5px;height:39px;line-height:38px;border-radius:0 20px 20px 0;background:linear-gradient(135deg,#3e4754 0%,#343d49 100%);border-left:1px solid #4b5563;font-size:12.8px;padding-right:7px">Codec</div>
<svg style="left:1426.5px;top:844.5px" width="22" height="22" viewBox="0 0 22 22"><circle cx="11" cy="11" r="9.2" fill="none" stroke="#f2f4f6" stroke-width="1.3"/><rect x="9.4" y="6.3" width="3.2" height="9.4" rx="1.6" fill="#f2f4f6"/></svg>
<div class="btn" style="left:1540px;top:836.5px;width:39px;height:39px;border-radius:20px 0 0 20px;background:linear-gradient(135deg,#3e4754 0%,#343d49 100%)"></div>
<div class="btn" style="left:1580.5px;top:836.5px;width:74.5px;height:39px;line-height:38px;border-radius:0 20px 20px 0;background:linear-gradient(135deg,#3e4754 0%,#343d49 100%);border-left:1px solid #4b5563;font-size:12.8px;padding-right:3px">Dither</div>
<svg style="left:1550.3px;top:844.5px" width="22" height="22" viewBox="0 0 22 22"><circle cx="11" cy="11" r="9.2" fill="none" stroke="#f2f4f6" stroke-width="1.3"/><rect x="9.4" y="6.3" width="3.2" height="9.4" rx="1.6" fill="#f2f4f6"/></svg>
<svg style="left:1674px;top:882px" width="13" height="13" viewBox="0 0 13 13" fill="none" stroke="#6d7882" stroke-width="1.2" stroke-linecap="round"><path d="M1 12L12 1M5 12l7-7M9 12l3-3"/></svg>

</div></body></html>
